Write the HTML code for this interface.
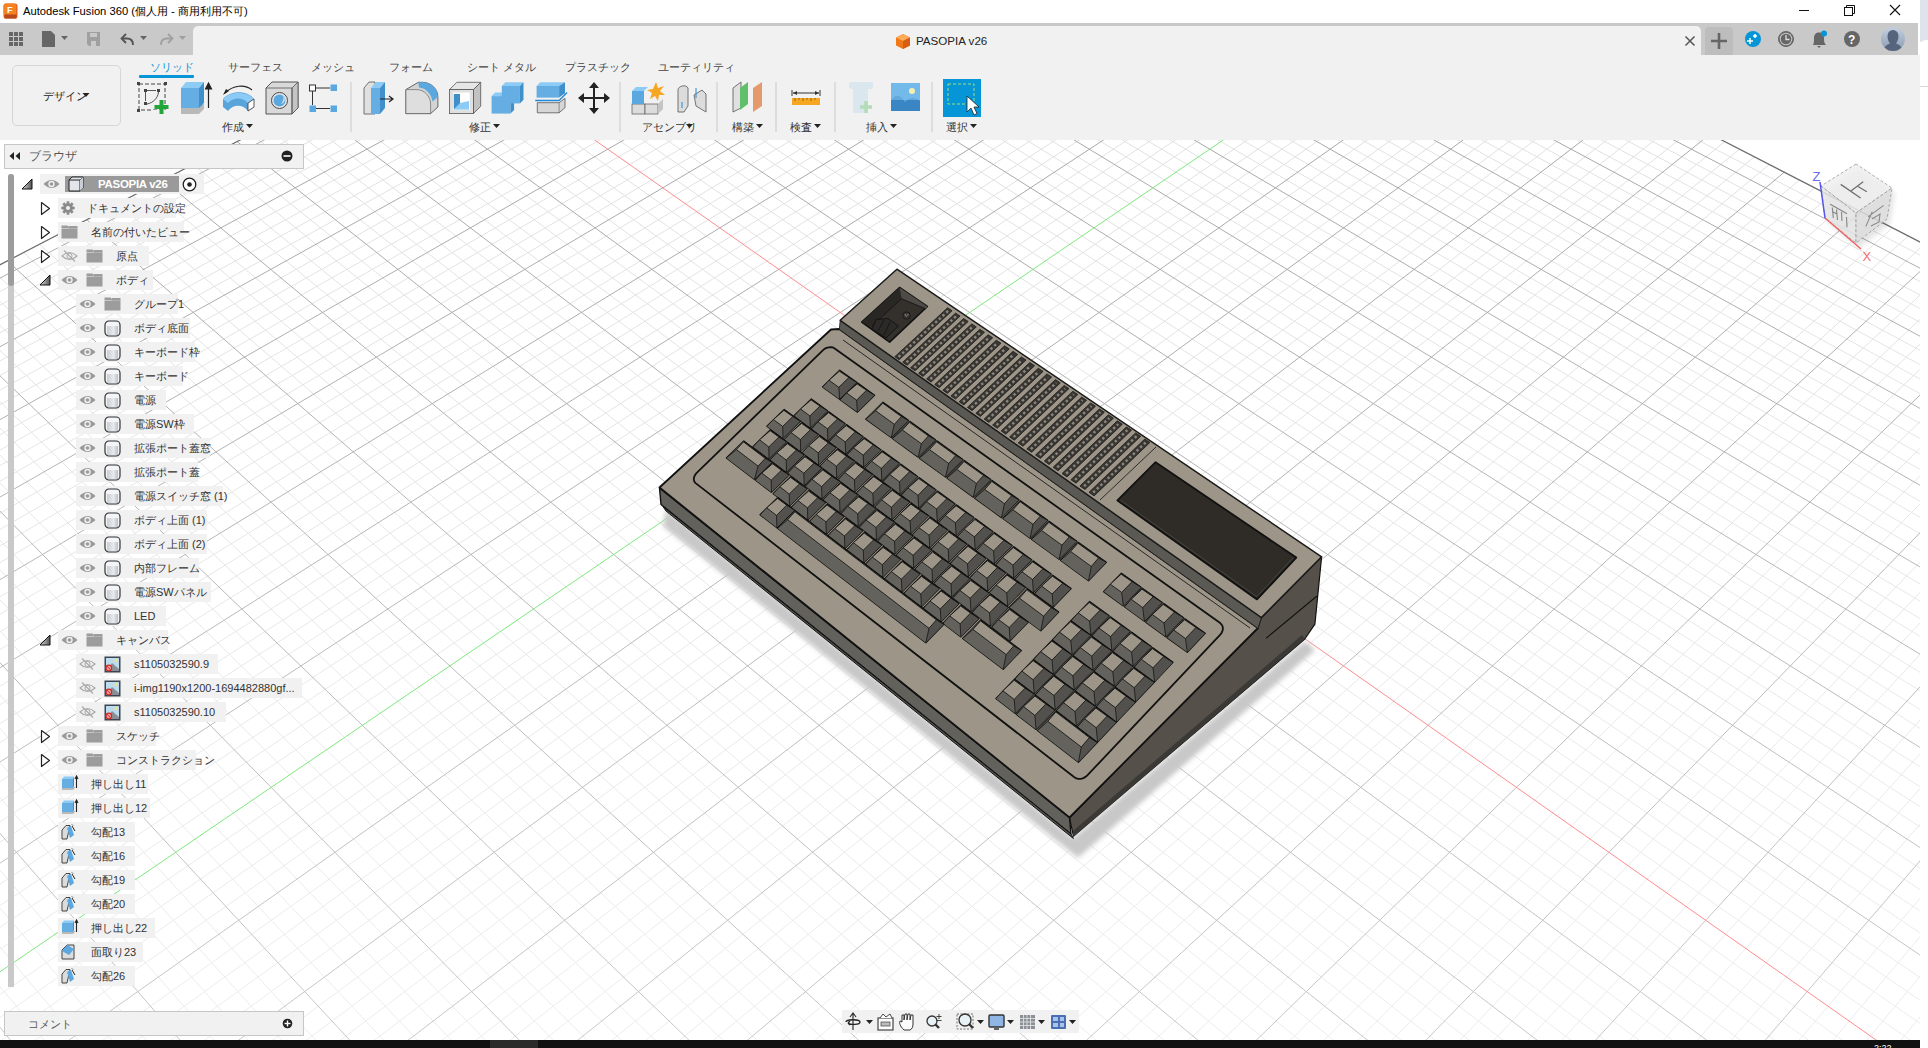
<!DOCTYPE html>
<html><head><meta charset="utf-8"><style>
*{box-sizing:border-box}
body{margin:0;width:1928px;height:1048px;position:relative;overflow:hidden;background:#fff;font-family:"Liberation Sans", sans-serif;}
.abs{position:absolute}
.row{background:#f1f1f1}
.txt{white-space:nowrap;line-height:14px}
.tab{font-size:11px;color:#444}
.lab{font-size:11px;color:#333}
</style></head><body>
<svg width="1928" height="1048" style="position:absolute;left:0;top:0">
<defs>
 <filter id="blur6" x="-20%" y="-20%" width="140%" height="140%"><feGaussianBlur stdDeviation="6"/></filter>
 <filter id="blur3" x="-20%" y="-20%" width="140%" height="140%"><feGaussianBlur stdDeviation="2.5"/></filter>
 <clipPath id="vp"><rect x="0" y="140" width="1920" height="900"/></clipPath>
</defs>
<g clip-path="url(#vp)">
<defs><linearGradient id="gmin" gradientUnits="userSpaceOnUse" x1="0" y1="140" x2="0" y2="1040"><stop offset="0" stop-color="#e1e1e1"/><stop offset="1" stop-color="#ededed"/></linearGradient><linearGradient id="gmaj" gradientUnits="userSpaceOnUse" x1="0" y1="140" x2="0" y2="1040"><stop offset="0" stop-color="#a8a8a8"/><stop offset="1" stop-color="#c8c8c8"/></linearGradient></defs>
<path d="M-536.8 543.8L977.2 -243.1M-520.5 565.2L997.2 -232.9M-512.3 576.0L1007.3 -227.7M-504.0 586.9L1017.4 -222.5M-495.6 597.9L1027.6 -217.2M-478.7 620.2L1048.1 -206.7M-470.1 631.5L1058.5 -201.3M-461.4 642.9L1068.9 -196.0M-452.7 654.3L1079.4 -190.6M-435.0 677.6L1100.5 -179.7M-426.1 689.4L1111.2 -174.2M-417.0 701.2L1121.9 -168.7M-407.9 713.2L1132.7 -163.1M-389.4 737.5L1154.5 -151.9M-380.1 749.8L1165.5 -146.2M-370.6 762.2L1176.6 -140.5M-361.1 774.7L1187.7 -134.8M-341.8 800.1L1210.2 -123.3M-332.0 813.0L1221.5 -117.4M-322.1 826.0L1232.9 -111.6M-312.1 839.1L1244.4 -105.7M-291.9 865.6L1267.5 -93.7M-281.7 879.1L1279.2 -87.7M-271.3 892.7L1291.0 -81.7M-260.9 906.4L1302.8 -75.6M-239.7 934.3L1326.7 -63.3M-229.0 948.4L1338.8 -57.1M-218.1 962.7L1350.9 -50.8M-207.2 977.0L1363.1 -44.6M-185.0 1006.2L1387.7 -31.9M-173.7 1021.1L1400.2 -25.5M-162.3 1036.0L1412.7 -19.0M-150.8 1051.1L1425.3 -12.5M-127.5 1081.8L1450.8 0.6M-115.7 1097.4L1463.6 7.2M-103.7 1113.1L1476.6 13.8M-91.6 1129.0L1489.6 20.5M-67.1 1161.2L1515.9 34.1M-54.6 1177.6L1529.2 40.9M-42.1 1194.1L1542.6 47.8M-29.3 1210.8L1556.0 54.7M-3.5 1244.8L1583.2 68.7M9.6 1262.0L1596.9 75.8M22.9 1279.4L1610.8 82.9M36.3 1297.0L1624.7 90.1M63.5 1332.8L1652.8 104.5M77.3 1351.0L1667.0 111.9M91.3 1369.4L1681.3 119.2M105.4 1388.0L1695.7 126.6M134.2 1425.7L1724.8 141.6M148.8 1444.9L1739.5 149.2M163.5 1464.4L1754.4 156.8M178.5 1484.0L1769.3 164.5M208.9 1523.9L1799.4 180.0M224.3 1544.2L1814.6 187.8M240.0 1564.8L1830.0 195.7M255.8 1585.6L1845.4 203.7M288.0 1627.9L1876.7 219.7M304.3 1649.4L1892.4 227.9M320.9 1671.2L1908.3 236.0M337.7 1693.2L1924.4 244.3M371.8 1738.1L1956.7 261.0M389.2 1760.9L1973.1 269.4M406.8 1784.1L1989.6 277.9M424.6 1807.5L2006.2 286.4M460.9 1855.2L2039.8 303.7M479.3 1879.4L2056.8 312.4M498.0 1904.0L2073.9 321.3M517.0 1928.9L2091.1 330.1M555.6 1979.7L2126.0 348.1M575.3 2005.6L2143.7 357.2M595.2 2031.8L2161.4 366.3M615.5 2058.4L2179.4 375.5M656.7 2112.5L2215.6 394.2M677.7 2140.2L2233.9 403.6M699.0 2168.2L2252.4 413.1M720.6 2196.5L2271.0 422.7M764.6 2254.4L2308.7 442.1M787.1 2284.0L2327.8 451.9M809.9 2314.0L2347.0 461.8M833.0 2344.4L2366.4 471.8M880.3 2406.4L2405.6 491.9M904.4 2438.1L2425.4 502.2M928.8 2470.3L2445.4 512.4M953.7 2502.9L2465.6 522.8M1004.4 2569.6L2506.4 543.8M1030.3 2603.7L2527.1 554.5M1056.6 2638.3L2547.9 565.2M1083.3 2673.4L2569.0 576.0M-516.5 533.3L1135.3 2673.4M-496.3 522.8L1159.8 2638.3M-476.4 512.4L1183.9 2603.7M-456.5 502.2L1207.7 2569.6M-417.4 481.8L1254.2 2502.9M-398.1 471.8L1276.9 2470.3M-378.9 461.8L1299.4 2438.1M-359.9 451.9L1321.5 2406.4M-322.3 432.4L1364.7 2344.4M-303.7 422.7L1385.9 2314.0M-285.3 413.1L1406.8 2284.0M-267.0 403.6L1427.4 2254.4M-230.8 384.8L1467.8 2196.5M-212.9 375.5L1487.6 2168.2M-195.2 366.3L1507.1 2140.2M-177.6 357.2L1526.4 2112.5M-142.8 339.1L1564.2 2058.4M-125.6 330.1L1582.7 2031.8M-108.5 321.3L1601.0 2005.6M-91.6 312.4L1619.0 1979.7M-58.1 295.0L1654.4 1928.9M-41.5 286.4L1671.8 1904.0M-25.1 277.9L1688.9 1879.4M-8.7 269.4L1705.9 1855.2M23.6 252.6L1739.1 1807.5M39.5 244.3L1755.4 1784.1M55.4 236.0L1771.5 1760.9M71.1 227.9L1787.5 1738.1M102.3 211.7L1818.8 1693.2M117.7 203.7L1834.1 1671.2M133.0 195.7L1849.3 1649.4M148.2 187.8L1864.3 1627.9M178.2 172.2L1893.8 1585.6M193.1 164.5L1908.3 1564.8M207.9 156.8L1922.6 1544.2M222.5 149.2L1936.8 1523.9M251.5 134.1L1964.7 1484.0M265.9 126.6L1978.3 1464.4M280.1 119.2L1991.9 1444.9M294.3 111.9L2005.3 1425.7M322.3 97.3L2031.6 1388.0M336.2 90.1L2044.6 1369.4M350.0 82.9L2057.4 1351.0M363.7 75.8L2070.1 1332.8M390.8 61.7L2095.0 1297.0M404.2 54.7L2107.3 1279.4M417.5 47.8L2119.4 1262.0M430.8 40.9L2131.5 1244.8M457.0 27.3L2155.1 1210.8M470.0 20.5L2166.8 1194.1M482.9 13.8L2178.3 1177.6M495.7 7.2L2189.7 1161.2M521.0 -6.0L2212.2 1129.0M533.6 -12.5L2223.3 1113.1M546.1 -19.0L2234.2 1097.4M558.5 -25.5L2245.1 1081.8M583.1 -38.2L2266.5 1051.1M595.2 -44.6L2277.0 1036.0M607.3 -50.8L2287.4 1021.1M619.3 -57.1L2297.8 1006.2M643.1 -69.5L2318.1 977.0M654.9 -75.6L2328.2 962.7M666.6 -81.7L2338.1 948.4M678.3 -87.7L2348.0 934.3M701.3 -99.7L2367.4 906.4M712.8 -105.7L2376.9 892.7M724.1 -111.6L2386.4 879.1M735.4 -117.4L2395.8 865.6M757.8 -129.1L2414.3 839.1M768.9 -134.8L2423.5 826.0M779.9 -140.5L2432.5 813.0M790.8 -146.2L2441.5 800.1M812.5 -157.5L2459.2 774.7M823.3 -163.1L2467.9 762.2M834.0 -168.7L2476.6 749.8M844.6 -174.2L2485.2 737.5M865.7 -185.1L2502.1 713.2M876.1 -190.6L2510.5 701.2M886.5 -196.0L2518.7 689.4M896.8 -201.3L2526.9 677.6M917.3 -212.0L2543.2 654.3M927.4 -217.2L2551.2 642.9M937.5 -222.5L2559.1 631.5M947.5 -227.7L2566.9 620.2M967.4 -238.0L2582.5 597.9M977.2 -243.1L2590.2 586.9" stroke="url(#gmin)" stroke-width="1" fill="none"/>
<path d="M-528.7 554.5L987.2 -238.0M-487.2 609.0L1037.8 -212.0M-443.9 665.9L1089.9 -185.1M-398.7 725.3L1143.6 -157.5M-351.5 787.4L1198.9 -129.1M-302.1 852.3L1255.9 -99.7M-250.4 920.3L1314.7 -69.5M-196.1 991.6L1375.4 -38.2M-79.4 1145.0L1502.7 27.3M-16.5 1227.7L1569.6 61.7M49.8 1314.8L1638.7 97.3M119.7 1406.7L1710.2 134.1M193.6 1503.9L1784.3 172.2M271.8 1606.6L1861.0 211.7M354.6 1715.5L1940.5 252.6M442.6 1831.2L2022.9 295.0M536.2 1954.2L2108.5 339.1M635.9 2085.3L2197.4 384.8M742.4 2225.3L2289.8 432.4M856.5 2375.2L2385.9 481.8M978.8 2536.0L2485.9 533.3M1110.5 2709.0L2590.2 586.9M-536.8 543.8L1110.5 2709.0M-436.9 491.9L1231.1 2536.0M-341.0 442.1L1343.3 2375.2M-248.8 394.2L1447.8 2225.3M-160.1 348.1L1545.4 2085.3M-74.8 303.7L1636.8 1954.2M7.5 261.0L1722.6 1831.2M86.8 219.7L1803.2 1715.5M163.2 180.0L1879.2 1606.6M237.1 141.6L1950.8 1503.9M308.4 104.5L2018.5 1406.7M377.3 68.7L2082.6 1314.8M508.4 0.6L2201.0 1145.0M570.8 -31.9L2255.8 1066.4M631.3 -63.3L2308.0 991.6M689.8 -93.7L2357.7 920.3M746.6 -123.3L2405.1 852.3M801.7 -151.9L2450.4 787.4M855.2 -179.7L2493.7 725.3M907.1 -206.7L2535.1 665.9M957.5 -232.9L2574.7 609.0" stroke="url(#gmaj)" stroke-width="1" fill="none"/>
<path d="M-536.8 543.8L977.2 -243.1L2590.2 586.9" stroke="#6e6e6e" stroke-width="1.2" fill="none"/>
<path d="M443.9 34.1L2143.4 1227.7" stroke="#ff8c8c" stroke-width="1" fill="none"/>
<path d="M-139.2 1066.4L1438.0 -6.0" stroke="#7ee87e" stroke-width="1" fill="none"/>
<polygon points="666,509 1073,838 1305,641 1315,650 1078,858 663,526" fill="#c8c8c8" filter="url(#blur3)"/>
<polygon points="1069.5,817.5 1258.0,628.0 1261.4,617.6 1321.6,556.8 1314.9,624.2 1304.8,639.0 1073.4,836.0" fill="#55514a" stroke="#111" stroke-width="1.2" stroke-linejoin="round" />
<path d="M1266,638.3 L1317,596" stroke="#111" stroke-width="1.1" fill="none"/>
<polygon points="1073.0,831.0 1302.0,635.0 1304.8,639.0 1073.4,837.0" fill="#3b3935" />
<polygon points="659.5,488.0 1069.5,817.5 1071.0,834.0 661.0,504.5" fill="#62615c" stroke="#111" stroke-width="1.4" stroke-linejoin="round" />
<polygon points="663.0,506.5 1071.0,834.0 1073.4,838.5 666.0,511.0" fill="#55544f" stroke="#111" stroke-width="1.0" stroke-linejoin="round" />
<polygon points="659.5,487.5 831.0,329.5 839.3,329.0 1258.0,628.0 1069.5,817.5" fill="#9d9688" stroke="#111" stroke-width="1.8" stroke-linejoin="round" />
<polygon points="840.2,320.3 1261.4,617.6 1258.0,628.5 839.3,329.5" fill="#5b5954" stroke="#1a1a1a" stroke-width="0.8" stroke-linejoin="round" />
<polygon points="896.9,269.2 840.2,320.3 1261.4,617.6 1321.6,556.8" fill="#9d9688" stroke="#1a1a1a" stroke-width="1.5" stroke-linejoin="round" />
<polygon points="894.8,356.7 899.2,359.8 952.1,310.8 947.6,307.8" fill="#393733" stroke="#111" stroke-width="0.7" stroke-linejoin="round" />
<path d="M898.6,356.8L948.3,310.7" stroke="#8d877b" stroke-width="2.4" stroke-dasharray="2.4,2.6"/>
<polygon points="902.7,362.2 907.1,365.3 960.1,316.1 955.6,313.1" fill="#393733" stroke="#111" stroke-width="0.7" stroke-linejoin="round" />
<path d="M906.5,362.3L956.3,316.1" stroke="#8d877b" stroke-width="2.4" stroke-dasharray="2.4,2.6"/>
<polygon points="910.6,367.7 915.1,370.8 968.2,321.5 963.6,318.5" fill="#393733" stroke="#111" stroke-width="0.7" stroke-linejoin="round" />
<path d="M914.4,367.8L964.3,321.5" stroke="#8d877b" stroke-width="2.4" stroke-dasharray="2.4,2.6"/>
<polygon points="918.6,373.3 923.0,376.4 976.3,326.9 971.7,323.9" fill="#393733" stroke="#111" stroke-width="0.7" stroke-linejoin="round" />
<path d="M922.4,373.4L972.4,326.9" stroke="#8d877b" stroke-width="2.4" stroke-dasharray="2.4,2.6"/>
<polygon points="926.6,378.9 931.1,382.1 984.5,332.3 979.9,329.3" fill="#393733" stroke="#111" stroke-width="0.7" stroke-linejoin="round" />
<path d="M930.4,379.0L980.6,332.3" stroke="#8d877b" stroke-width="2.4" stroke-dasharray="2.4,2.6"/>
<polygon points="934.7,384.5 939.2,387.7 992.7,337.8 988.1,334.7" fill="#393733" stroke="#111" stroke-width="0.7" stroke-linejoin="round" />
<path d="M938.5,384.6L988.8,337.8" stroke="#8d877b" stroke-width="2.4" stroke-dasharray="2.4,2.6"/>
<polygon points="942.8,390.2 947.3,393.4 1001.0,343.3 996.3,340.2" fill="#393733" stroke="#111" stroke-width="0.7" stroke-linejoin="round" />
<path d="M946.7,390.3L997.0,343.3" stroke="#8d877b" stroke-width="2.4" stroke-dasharray="2.4,2.6"/>
<polygon points="950.9,395.9 955.5,399.1 1009.3,348.9 1004.6,345.8" fill="#393733" stroke="#111" stroke-width="0.7" stroke-linejoin="round" />
<path d="M954.9,396.0L1005.3,348.8" stroke="#8d877b" stroke-width="2.4" stroke-dasharray="2.4,2.6"/>
<polygon points="959.2,401.7 963.8,404.9 1017.7,354.4 1013.0,351.3" fill="#393733" stroke="#111" stroke-width="0.7" stroke-linejoin="round" />
<path d="M963.1,401.8L1013.7,354.4" stroke="#8d877b" stroke-width="2.4" stroke-dasharray="2.4,2.6"/>
<polygon points="967.4,407.4 972.1,410.7 1026.1,360.1 1021.4,356.9" fill="#393733" stroke="#111" stroke-width="0.7" stroke-linejoin="round" />
<path d="M971.4,407.5L1022.1,360.0" stroke="#8d877b" stroke-width="2.4" stroke-dasharray="2.4,2.6"/>
<polygon points="975.8,413.3 980.4,416.5 1034.6,365.7 1029.8,362.5" fill="#393733" stroke="#111" stroke-width="0.7" stroke-linejoin="round" />
<path d="M979.7,413.4L1030.6,365.6" stroke="#8d877b" stroke-width="2.4" stroke-dasharray="2.4,2.6"/>
<polygon points="984.1,419.1 988.9,422.4 1043.1,371.4 1038.3,368.2" fill="#393733" stroke="#111" stroke-width="0.7" stroke-linejoin="round" />
<path d="M988.1,419.2L1039.1,371.3" stroke="#8d877b" stroke-width="2.4" stroke-dasharray="2.4,2.6"/>
<polygon points="992.6,425.0 997.3,428.3 1051.7,377.1 1046.9,373.9" fill="#393733" stroke="#111" stroke-width="0.7" stroke-linejoin="round" />
<path d="M996.6,425.1L1047.7,377.0" stroke="#8d877b" stroke-width="2.4" stroke-dasharray="2.4,2.6"/>
<polygon points="1001.1,430.9 1005.8,434.3 1060.3,382.9 1055.5,379.6" fill="#393733" stroke="#111" stroke-width="0.7" stroke-linejoin="round" />
<path d="M1005.1,431.0L1056.3,382.8" stroke="#8d877b" stroke-width="2.4" stroke-dasharray="2.4,2.6"/>
<polygon points="1009.6,436.9 1014.4,440.2 1069.0,388.6 1064.2,385.4" fill="#393733" stroke="#111" stroke-width="0.7" stroke-linejoin="round" />
<path d="M1013.6,437.0L1065.0,388.6" stroke="#8d877b" stroke-width="2.4" stroke-dasharray="2.4,2.6"/>
<polygon points="1018.2,442.9 1023.0,446.3 1077.8,394.5 1072.9,391.2" fill="#393733" stroke="#111" stroke-width="0.7" stroke-linejoin="round" />
<path d="M1022.3,443.0L1073.7,394.4" stroke="#8d877b" stroke-width="2.4" stroke-dasharray="2.4,2.6"/>
<polygon points="1026.8,448.9 1031.7,452.3 1086.6,400.3 1081.7,397.1" fill="#393733" stroke="#111" stroke-width="0.7" stroke-linejoin="round" />
<path d="M1030.9,449.1L1082.5,400.2" stroke="#8d877b" stroke-width="2.4" stroke-dasharray="2.4,2.6"/>
<polygon points="1035.5,455.0 1040.4,458.4 1095.5,406.2 1090.5,402.9" fill="#393733" stroke="#111" stroke-width="0.7" stroke-linejoin="round" />
<path d="M1039.7,455.1L1091.4,406.1" stroke="#8d877b" stroke-width="2.4" stroke-dasharray="2.4,2.6"/>
<polygon points="1044.3,461.1 1049.2,464.6 1104.4,412.2 1099.4,408.9" fill="#393733" stroke="#111" stroke-width="0.7" stroke-linejoin="round" />
<path d="M1048.4,461.3L1100.3,412.1" stroke="#8d877b" stroke-width="2.4" stroke-dasharray="2.4,2.6"/>
<polygon points="1053.1,467.3 1058.1,470.8 1113.4,418.2 1108.4,414.8" fill="#393733" stroke="#111" stroke-width="0.7" stroke-linejoin="round" />
<path d="M1057.3,467.4L1109.2,418.1" stroke="#8d877b" stroke-width="2.4" stroke-dasharray="2.4,2.6"/>
<polygon points="1062.0,473.5 1067.0,477.0 1122.4,424.2 1117.4,420.8" fill="#393733" stroke="#111" stroke-width="0.7" stroke-linejoin="round" />
<path d="M1066.2,473.6L1118.2,424.1" stroke="#8d877b" stroke-width="2.4" stroke-dasharray="2.4,2.6"/>
<polygon points="1070.9,479.7 1076.0,483.2 1131.5,430.2 1126.4,426.9" fill="#393733" stroke="#111" stroke-width="0.7" stroke-linejoin="round" />
<path d="M1075.1,479.9L1127.3,430.1" stroke="#8d877b" stroke-width="2.4" stroke-dasharray="2.4,2.6"/>
<polygon points="1079.9,486.0 1085.0,489.5 1140.7,436.3 1135.6,432.9" fill="#393733" stroke="#111" stroke-width="0.7" stroke-linejoin="round" />
<path d="M1084.1,486.2L1136.5,436.2" stroke="#8d877b" stroke-width="2.4" stroke-dasharray="2.4,2.6"/>
<polygon points="1089.0,492.3 1094.1,495.9 1149.9,442.5 1144.8,439.0" fill="#393733" stroke="#111" stroke-width="0.7" stroke-linejoin="round" />
<path d="M1093.2,492.5L1145.7,442.4" stroke="#8d877b" stroke-width="2.4" stroke-dasharray="2.4,2.6"/>
<path d="M1100,500 L1156,447" stroke="#111" stroke-width="0.8"/>
<polygon points="1155.6,462.2 1117.4,500.4 1257.0,599.4 1296.3,557.6" fill="#2f2c28" stroke="#111" stroke-width="1.8" stroke-linejoin="round" />
<path d="M1120.5,500.3 L1256.8,596.6 L1293.2,557.8" stroke="#4a4742" stroke-width="0.9" fill="none"/>
<polygon points="899.5,287.5 861.7,322.0 889.6,342.2 927.4,306.5" fill="#34312d" stroke="#111" stroke-width="1.6" stroke-linejoin="round" />
<polygon points="899.5,287.5 927.4,306.5 925.7,308.8 901.6,298.8" fill="#4e4b46" />
<polygon points="899.5,287.5 901.6,298.8 871.5,326.3 861.7,322.0" fill="#292724" />
<path d="M901.6,298.8 L925.7,308.8 M901.6,298.8 L871.5,326.3" stroke="#111" stroke-width="0.8"/>
<polygon points="876.0,319.5 888.0,318.5 898.5,326.0 886.0,338.0 872.0,329.0" fill="#2c2a27" stroke="#111" stroke-width="0.9" stroke-linejoin="round" />
<path d="M884,320 L878,331 M890,322 L884,335" stroke="#111" stroke-width="0.8"/>
<circle cx="906.5" cy="315.5" r="3.6" fill="#3a3834" stroke="#111" stroke-width="0.8"/>
<path d="M905,314 Q906,318 908.5,314" stroke="#999" stroke-width="0.8" fill="none"/>
<path d="M843,340 L1250,628" stroke="#1a1a1a" stroke-width="0.9"/>
<polygon points="1074.4,777.3 1076.3,778.4 1078.5,778.9 1080.9,778.8 1083.3,778.1 1085.5,776.9 1087.5,775.2 1220.3,634.6 1221.7,632.7 1222.6,630.6 1222.9,628.4 1222.6,626.4 1221.6,624.6 1220.2,623.1 834.3,348.2 832.7,347.4 830.8,347.1 828.7,347.3 826.6,347.9 824.5,348.9 822.8,350.4 696.7,472.8 695.3,474.6 694.3,476.5 693.8,478.4 693.9,480.2 694.5,481.8 695.6,483.1" fill="#9d9688" stroke="#111" stroke-width="1.8" stroke-linejoin="round" />
<polygon points="822.6,386.9 839.6,399.2 856.7,382.4 839.7,370.2" fill="#5a5955" stroke="#0d0d0d" stroke-width="1.3" stroke-linejoin="round" />
<polygon points="822.6,386.9 839.6,399.2 838.8,387.3 829.0,380.2" fill="#63625d" />
<polygon points="839.6,399.2 856.7,382.4 848.8,377.6 838.8,387.3" fill="#52514d" />
<polygon points="822.6,386.9 829.0,380.2 839.4,371.2 839.7,370.2" fill="#60605b" />
<polygon points="829.0,380.2 838.8,387.3 848.8,377.6 839.4,371.2" fill="#9d9688" stroke="#0d0d0d" stroke-width="0.8" stroke-linejoin="round" />
<path d="M822.6,386.9L829.0,380.2M839.6,399.2L838.8,387.3M856.7,382.4L848.8,377.6" stroke="#0d0d0d" stroke-width="0.7"/>
<polygon points="840.2,399.7 857.4,412.1 874.6,395.2 857.4,382.9" fill="#5a5955" stroke="#0d0d0d" stroke-width="1.3" stroke-linejoin="round" />
<polygon points="840.2,399.7 857.4,412.1 856.6,400.1 846.6,392.9" fill="#63625d" />
<polygon points="857.4,412.1 874.6,395.2 866.5,390.3 856.6,400.1" fill="#52514d" />
<polygon points="840.2,399.7 846.6,392.9 857.1,383.9 857.4,382.9" fill="#60605b" />
<polygon points="846.6,392.9 856.6,400.1 866.5,390.3 857.1,383.9" fill="#9d9688" stroke="#0d0d0d" stroke-width="0.8" stroke-linejoin="round" />
<path d="M840.2,399.7L846.6,392.9M857.4,412.1L856.6,400.1M874.6,395.2L866.5,390.3" stroke="#0d0d0d" stroke-width="0.7"/>
<polygon points="865.8,419.1 891.2,437.5 908.4,420.4 883.0,402.2" fill="#5a5955" stroke="#0d0d0d" stroke-width="1.3" stroke-linejoin="round" />
<polygon points="865.8,419.1 891.2,437.5 894.4,424.3 875.7,410.8" fill="#63625d" />
<polygon points="891.2,437.5 908.4,420.4 901.4,416.6 894.4,424.3" fill="#52514d" />
<polygon points="865.8,419.1 875.7,410.8 882.7,403.2 883.0,402.2" fill="#60605b" />
<polygon points="875.7,410.8 894.4,424.3 901.4,416.6 882.7,403.2" fill="#9d9688" stroke="#0d0d0d" stroke-width="0.8" stroke-linejoin="round" />
<path d="M865.8,419.1L875.7,410.8M891.2,437.5L894.4,424.3M908.4,420.4L901.4,416.6" stroke="#0d0d0d" stroke-width="0.7"/>
<polygon points="892.4,438.5 918.2,457.1 935.5,439.8 909.7,421.3" fill="#5a5955" stroke="#0d0d0d" stroke-width="1.3" stroke-linejoin="round" />
<polygon points="892.4,438.5 918.2,457.1 921.4,443.7 902.4,430.0" fill="#63625d" />
<polygon points="918.2,457.1 935.5,439.8 928.4,435.9 921.4,443.7" fill="#52514d" />
<polygon points="892.4,438.5 902.4,430.0 909.4,422.3 909.7,421.3" fill="#60605b" />
<polygon points="902.4,430.0 921.4,443.7 928.4,435.9 909.4,422.3" fill="#9d9688" stroke="#0d0d0d" stroke-width="0.8" stroke-linejoin="round" />
<path d="M892.4,438.5L902.4,430.0M918.2,457.1L921.4,443.7M935.5,439.8L928.4,435.9" stroke="#0d0d0d" stroke-width="0.7"/>
<polygon points="919.4,458.1 945.5,477.0 962.9,459.5 936.8,440.8" fill="#5a5955" stroke="#0d0d0d" stroke-width="1.3" stroke-linejoin="round" />
<polygon points="919.4,458.1 945.5,477.0 948.7,463.4 929.5,449.6" fill="#63625d" />
<polygon points="945.5,477.0 962.9,459.5 955.7,455.6 948.7,463.4" fill="#52514d" />
<polygon points="919.4,458.1 929.5,449.6 936.5,441.8 936.8,440.8" fill="#60605b" />
<polygon points="929.5,449.6 948.7,463.4 955.7,455.6 936.5,441.8" fill="#9d9688" stroke="#0d0d0d" stroke-width="0.8" stroke-linejoin="round" />
<path d="M919.4,458.1L929.5,449.6M945.5,477.0L948.7,463.4M962.9,459.5L955.7,455.6" stroke="#0d0d0d" stroke-width="0.7"/>
<polygon points="946.9,477.9 973.3,497.1 990.8,479.5 964.3,460.5" fill="#5a5955" stroke="#0d0d0d" stroke-width="1.3" stroke-linejoin="round" />
<polygon points="946.9,477.9 973.3,497.1 976.4,483.4 956.9,469.4" fill="#63625d" />
<polygon points="973.3,497.1 990.8,479.5 983.5,475.5 976.4,483.4" fill="#52514d" />
<polygon points="946.9,477.9 956.9,469.4 964.0,461.5 964.3,460.5" fill="#60605b" />
<polygon points="956.9,469.4 976.4,483.4 983.5,475.5 964.0,461.5" fill="#9d9688" stroke="#0d0d0d" stroke-width="0.8" stroke-linejoin="round" />
<path d="M946.9,477.9L956.9,469.4M973.3,497.1L976.4,483.4M990.8,479.5L983.5,475.5" stroke="#0d0d0d" stroke-width="0.7"/>
<polygon points="974.7,498.1 1001.5,517.6 1019.0,499.8 992.1,480.5" fill="#5a5955" stroke="#0d0d0d" stroke-width="1.3" stroke-linejoin="round" />
<polygon points="974.7,498.1 1001.5,517.6 1004.5,503.7 984.7,489.4" fill="#63625d" />
<polygon points="1001.5,517.6 1019.0,499.8 1011.6,495.7 1004.5,503.7" fill="#52514d" />
<polygon points="974.7,498.1 984.7,489.4 991.8,481.5 992.1,480.5" fill="#60605b" />
<polygon points="984.7,489.4 1004.5,503.7 1011.6,495.7 991.8,481.5" fill="#9d9688" stroke="#0d0d0d" stroke-width="0.8" stroke-linejoin="round" />
<path d="M974.7,498.1L984.7,489.4M1001.5,517.6L1004.5,503.7M1019.0,499.8L1011.6,495.7" stroke="#0d0d0d" stroke-width="0.7"/>
<polygon points="1002.9,518.5 1030.1,538.3 1047.7,520.3 1020.4,500.7" fill="#5a5955" stroke="#0d0d0d" stroke-width="1.3" stroke-linejoin="round" />
<polygon points="1002.9,518.5 1030.1,538.3 1033.0,524.3 1013.0,509.8" fill="#63625d" />
<polygon points="1030.1,538.3 1047.7,520.3 1040.2,516.2 1033.0,524.3" fill="#52514d" />
<polygon points="1002.9,518.5 1013.0,509.8 1020.1,501.7 1020.4,500.7" fill="#60605b" />
<polygon points="1013.0,509.8 1033.0,524.3 1040.2,516.2 1020.1,501.7" fill="#9d9688" stroke="#0d0d0d" stroke-width="0.8" stroke-linejoin="round" />
<path d="M1002.9,518.5L1013.0,509.8M1030.1,538.3L1033.0,524.3M1047.7,520.3L1040.2,516.2" stroke="#0d0d0d" stroke-width="0.7"/>
<polygon points="1031.5,539.3 1059.1,559.3 1076.8,541.2 1049.1,521.3" fill="#5a5955" stroke="#0d0d0d" stroke-width="1.3" stroke-linejoin="round" />
<polygon points="1031.5,539.3 1059.1,559.3 1062.0,545.2 1041.6,530.5" fill="#63625d" />
<polygon points="1059.1,559.3 1076.8,541.2 1069.2,536.9 1062.0,545.2" fill="#52514d" />
<polygon points="1031.5,539.3 1041.6,530.5 1048.8,522.3 1049.1,521.3" fill="#60605b" />
<polygon points="1041.6,530.5 1062.0,545.2 1069.2,536.9 1048.8,522.3" fill="#9d9688" stroke="#0d0d0d" stroke-width="0.8" stroke-linejoin="round" />
<path d="M1031.5,539.3L1041.6,530.5M1059.1,559.3L1062.0,545.2M1076.8,541.2L1069.2,536.9" stroke="#0d0d0d" stroke-width="0.7"/>
<polygon points="1060.5,560.3 1088.5,580.7 1106.3,562.3 1078.2,542.2" fill="#5a5955" stroke="#0d0d0d" stroke-width="1.3" stroke-linejoin="round" />
<polygon points="1060.5,560.3 1088.5,580.7 1091.3,566.4 1070.7,551.5" fill="#63625d" />
<polygon points="1088.5,580.7 1106.3,562.3 1098.5,558.0 1091.3,566.4" fill="#52514d" />
<polygon points="1060.5,560.3 1070.7,551.5 1077.9,543.2 1078.2,542.2" fill="#60605b" />
<polygon points="1070.7,551.5 1091.3,566.4 1098.5,558.0 1077.9,543.2" fill="#9d9688" stroke="#0d0d0d" stroke-width="0.8" stroke-linejoin="round" />
<path d="M1060.5,560.3L1070.7,551.5M1088.5,580.7L1091.3,566.4M1106.3,562.3L1098.5,558.0" stroke="#0d0d0d" stroke-width="0.7"/>
<polygon points="1103.6,591.6 1123.3,605.9 1141.1,587.3 1121.4,573.2" fill="#5a5955" stroke="#0d0d0d" stroke-width="1.3" stroke-linejoin="round" />
<polygon points="1103.6,591.6 1123.3,605.9 1121.7,592.4 1110.3,584.2" fill="#63625d" />
<polygon points="1123.3,605.9 1141.1,587.3 1132.0,581.7 1121.7,592.4" fill="#52514d" />
<polygon points="1103.6,591.6 1110.3,584.2 1121.1,574.2 1121.4,573.2" fill="#60605b" />
<polygon points="1110.3,584.2 1121.7,592.4 1132.0,581.7 1121.1,574.2" fill="#9d9688" stroke="#0d0d0d" stroke-width="0.8" stroke-linejoin="round" />
<path d="M1103.6,591.6L1110.3,584.2M1123.3,605.9L1121.7,592.4M1141.1,587.3L1132.0,581.7" stroke="#0d0d0d" stroke-width="0.7"/>
<polygon points="1124.5,606.8 1144.4,621.2 1162.2,602.5 1142.3,588.2" fill="#5a5955" stroke="#0d0d0d" stroke-width="1.3" stroke-linejoin="round" />
<polygon points="1124.5,606.8 1144.4,621.2 1142.7,607.6 1131.2,599.3" fill="#63625d" />
<polygon points="1144.4,621.2 1162.2,602.5 1153.1,596.8 1142.7,607.6" fill="#52514d" />
<polygon points="1124.5,606.8 1131.2,599.3 1142.0,589.2 1142.3,588.2" fill="#60605b" />
<polygon points="1131.2,599.3 1142.7,607.6 1153.1,596.8 1142.0,589.2" fill="#9d9688" stroke="#0d0d0d" stroke-width="0.8" stroke-linejoin="round" />
<path d="M1124.5,606.8L1131.2,599.3M1144.4,621.2L1142.7,607.6M1162.2,602.5L1153.1,596.8" stroke="#0d0d0d" stroke-width="0.7"/>
<polygon points="1145.7,622.1 1165.7,636.7 1183.6,617.8 1163.5,603.4" fill="#5a5955" stroke="#0d0d0d" stroke-width="1.3" stroke-linejoin="round" />
<polygon points="1145.7,622.1 1165.7,636.7 1164.0,623.0 1152.3,614.5" fill="#63625d" />
<polygon points="1165.7,636.7 1183.6,617.8 1174.4,612.1 1164.0,623.0" fill="#52514d" />
<polygon points="1145.7,622.1 1152.3,614.5 1163.2,604.4 1163.5,603.4" fill="#60605b" />
<polygon points="1152.3,614.5 1164.0,623.0 1174.4,612.1 1163.2,604.4" fill="#9d9688" stroke="#0d0d0d" stroke-width="0.8" stroke-linejoin="round" />
<path d="M1145.7,622.1L1152.3,614.5M1165.7,636.7L1164.0,623.0M1183.6,617.8L1174.4,612.1" stroke="#0d0d0d" stroke-width="0.7"/>
<polygon points="1167.0,637.6 1187.3,652.3 1205.2,633.3 1184.9,618.8" fill="#5a5955" stroke="#0d0d0d" stroke-width="1.3" stroke-linejoin="round" />
<polygon points="1167.0,637.6 1187.3,652.3 1185.5,638.5 1173.7,630.0" fill="#63625d" />
<polygon points="1187.3,652.3 1205.2,633.3 1195.9,627.5 1185.5,638.5" fill="#52514d" />
<polygon points="1167.0,637.6 1173.7,630.0 1184.6,619.8 1184.9,618.8" fill="#60605b" />
<polygon points="1173.7,630.0 1185.5,638.5 1195.9,627.5 1184.6,619.8" fill="#9d9688" stroke="#0d0d0d" stroke-width="0.8" stroke-linejoin="round" />
<path d="M1167.0,637.6L1173.7,630.0M1187.3,652.3L1185.5,638.5M1205.2,633.3L1195.9,627.5" stroke="#0d0d0d" stroke-width="0.7"/>
<polygon points="1071.3,620.4 1090.9,634.8 1109.2,615.8 1089.6,601.5" fill="#5a5955" stroke="#0d0d0d" stroke-width="1.3" stroke-linejoin="round" />
<polygon points="1071.3,620.4 1090.9,634.8 1089.5,621.1 1078.2,612.8" fill="#63625d" />
<polygon points="1090.9,634.8 1109.2,615.8 1100.1,610.1 1089.5,621.1" fill="#52514d" />
<polygon points="1071.3,620.4 1078.2,612.8 1089.3,602.5 1089.6,601.5" fill="#60605b" />
<polygon points="1078.2,612.8 1089.5,621.1 1100.1,610.1 1089.3,602.5" fill="#9d9688" stroke="#0d0d0d" stroke-width="0.8" stroke-linejoin="round" />
<path d="M1071.3,620.4L1078.2,612.8M1090.9,634.8L1089.5,621.1M1109.2,615.8L1100.1,610.1" stroke="#0d0d0d" stroke-width="0.7"/>
<polygon points="1092.1,635.8 1111.9,650.4 1130.2,631.2 1110.4,616.7" fill="#5a5955" stroke="#0d0d0d" stroke-width="1.3" stroke-linejoin="round" />
<polygon points="1092.1,635.8 1111.9,650.4 1110.5,636.5 1099.0,628.1" fill="#63625d" />
<polygon points="1111.9,650.4 1130.2,631.2 1121.1,625.4 1110.5,636.5" fill="#52514d" />
<polygon points="1092.1,635.8 1099.0,628.1 1110.1,617.7 1110.4,616.7" fill="#60605b" />
<polygon points="1099.0,628.1 1110.5,636.5 1121.1,625.4 1110.1,617.7" fill="#9d9688" stroke="#0d0d0d" stroke-width="0.8" stroke-linejoin="round" />
<path d="M1092.1,635.8L1099.0,628.1M1111.9,650.4L1110.5,636.5M1130.2,631.2L1121.1,625.4" stroke="#0d0d0d" stroke-width="0.7"/>
<polygon points="1113.1,651.3 1133.1,666.0 1151.5,646.7 1131.5,632.1" fill="#5a5955" stroke="#0d0d0d" stroke-width="1.3" stroke-linejoin="round" />
<polygon points="1113.1,651.3 1133.1,666.0 1131.6,652.1 1120.0,643.5" fill="#63625d" />
<polygon points="1133.1,666.0 1151.5,646.7 1142.3,640.9 1131.6,652.1" fill="#52514d" />
<polygon points="1113.1,651.3 1120.0,643.5 1131.2,633.1 1131.5,632.1" fill="#60605b" />
<polygon points="1120.0,643.5 1131.6,652.1 1142.3,640.9 1131.2,633.1" fill="#9d9688" stroke="#0d0d0d" stroke-width="0.8" stroke-linejoin="round" />
<path d="M1113.1,651.3L1120.0,643.5M1133.1,666.0L1131.6,652.1M1151.5,646.7L1142.3,640.9" stroke="#0d0d0d" stroke-width="0.7"/>
<polygon points="1134.4,667.0 1154.6,681.9 1173.0,662.4 1152.8,647.7" fill="#5a5955" stroke="#0d0d0d" stroke-width="1.3" stroke-linejoin="round" />
<polygon points="1134.4,667.0 1154.6,681.9 1153.0,667.8 1141.3,659.2" fill="#63625d" />
<polygon points="1154.6,681.9 1173.0,662.4 1163.7,656.5 1153.0,667.8" fill="#52514d" />
<polygon points="1134.4,667.0 1141.3,659.2 1152.5,648.7 1152.8,647.7" fill="#60605b" />
<polygon points="1141.3,659.2 1153.0,667.8 1163.7,656.5 1152.5,648.7" fill="#9d9688" stroke="#0d0d0d" stroke-width="0.8" stroke-linejoin="round" />
<path d="M1134.4,667.0L1141.3,659.2M1154.6,681.9L1153.0,667.8M1173.0,662.4L1163.7,656.5" stroke="#0d0d0d" stroke-width="0.7"/>
<polygon points="794.1,415.8 810.3,427.7 827.5,410.8 811.3,398.9" fill="#5a5955" stroke="#0d0d0d" stroke-width="1.3" stroke-linejoin="round" />
<polygon points="794.1,415.8 810.3,427.7 809.9,415.9 800.5,409.0" fill="#63625d" />
<polygon points="810.3,427.7 827.5,410.8 819.9,406.1 809.9,415.9" fill="#52514d" />
<polygon points="794.1,415.8 800.5,409.0 811.0,399.9 811.3,398.9" fill="#60605b" />
<polygon points="800.5,409.0 809.9,415.9 819.9,406.1 811.0,399.9" fill="#9d9688" stroke="#0d0d0d" stroke-width="0.8" stroke-linejoin="round" />
<path d="M794.1,415.8L800.5,409.0M810.3,427.7L809.9,415.9M827.5,410.8L819.9,406.1" stroke="#0d0d0d" stroke-width="0.7"/>
<polygon points="811.6,428.7 827.9,440.7 845.2,423.7 828.8,411.7" fill="#5a5955" stroke="#0d0d0d" stroke-width="1.3" stroke-linejoin="round" />
<polygon points="811.6,428.7 827.9,440.7 827.5,428.8 818.0,421.8" fill="#63625d" />
<polygon points="827.9,440.7 845.2,423.7 837.5,419.0 827.5,428.8" fill="#52514d" />
<polygon points="811.6,428.7 818.0,421.8 828.5,412.7 828.8,411.7" fill="#60605b" />
<polygon points="818.0,421.8 827.5,428.8 837.5,419.0 828.5,412.7" fill="#9d9688" stroke="#0d0d0d" stroke-width="0.8" stroke-linejoin="round" />
<path d="M811.6,428.7L818.0,421.8M827.9,440.7L827.5,428.8M845.2,423.7L837.5,419.0" stroke="#0d0d0d" stroke-width="0.7"/>
<polygon points="829.2,441.7 845.7,453.8 863.1,436.7 846.5,424.6" fill="#5a5955" stroke="#0d0d0d" stroke-width="1.3" stroke-linejoin="round" />
<polygon points="829.2,441.7 845.7,453.8 845.2,441.9 835.7,434.8" fill="#63625d" />
<polygon points="845.7,453.8 863.1,436.7 855.3,431.9 845.2,441.9" fill="#52514d" />
<polygon points="829.2,441.7 835.7,434.8 846.2,425.6 846.5,424.6" fill="#60605b" />
<polygon points="835.7,434.8 845.2,441.9 855.3,431.9 846.2,425.6" fill="#9d9688" stroke="#0d0d0d" stroke-width="0.8" stroke-linejoin="round" />
<path d="M829.2,441.7L835.7,434.8M845.7,453.8L845.2,441.9M863.1,436.7L855.3,431.9" stroke="#0d0d0d" stroke-width="0.7"/>
<polygon points="847.0,454.8 863.7,467.1 881.1,449.9 864.4,437.7" fill="#5a5955" stroke="#0d0d0d" stroke-width="1.3" stroke-linejoin="round" />
<polygon points="847.0,454.8 863.7,467.1 863.2,455.1 853.5,447.9" fill="#63625d" />
<polygon points="863.7,467.1 881.1,449.9 873.3,445.0 863.2,455.1" fill="#52514d" />
<polygon points="847.0,454.8 853.5,447.9 864.1,438.7 864.4,437.7" fill="#60605b" />
<polygon points="853.5,447.9 863.2,455.1 873.3,445.0 864.1,438.7" fill="#9d9688" stroke="#0d0d0d" stroke-width="0.8" stroke-linejoin="round" />
<path d="M847.0,454.8L853.5,447.9M863.7,467.1L863.2,455.1M881.1,449.9L873.3,445.0" stroke="#0d0d0d" stroke-width="0.7"/>
<polygon points="865.0,468.1 881.8,480.5 899.3,463.1 882.4,450.9" fill="#5a5955" stroke="#0d0d0d" stroke-width="1.3" stroke-linejoin="round" />
<polygon points="865.0,468.1 881.8,480.5 881.3,468.4 871.5,461.2" fill="#63625d" />
<polygon points="881.8,480.5 899.3,463.1 891.4,458.3 881.3,468.4" fill="#52514d" />
<polygon points="865.0,468.1 871.5,461.2 882.1,451.9 882.4,450.9" fill="#60605b" />
<polygon points="871.5,461.2 881.3,468.4 891.4,458.3 882.1,451.9" fill="#9d9688" stroke="#0d0d0d" stroke-width="0.8" stroke-linejoin="round" />
<path d="M865.0,468.1L871.5,461.2M881.8,480.5L881.3,468.4M899.3,463.1L891.4,458.3" stroke="#0d0d0d" stroke-width="0.7"/>
<polygon points="883.2,481.5 900.1,494.0 917.6,476.6 900.6,464.1" fill="#5a5955" stroke="#0d0d0d" stroke-width="1.3" stroke-linejoin="round" />
<polygon points="883.2,481.5 900.1,494.0 899.5,481.8 889.7,474.5" fill="#63625d" />
<polygon points="900.1,494.0 917.6,476.6 909.7,471.6 899.5,481.8" fill="#52514d" />
<polygon points="883.2,481.5 889.7,474.5 900.3,465.1 900.6,464.1" fill="#60605b" />
<polygon points="889.7,474.5 899.5,481.8 909.7,471.6 900.3,465.1" fill="#9d9688" stroke="#0d0d0d" stroke-width="0.8" stroke-linejoin="round" />
<path d="M883.2,481.5L889.7,474.5M900.1,494.0L899.5,481.8M917.6,476.6L909.7,471.6" stroke="#0d0d0d" stroke-width="0.7"/>
<polygon points="901.5,495.0 918.6,507.7 936.1,490.1 919.0,477.6" fill="#5a5955" stroke="#0d0d0d" stroke-width="1.3" stroke-linejoin="round" />
<polygon points="901.5,495.0 918.6,507.7 918.0,495.3 908.0,488.0" fill="#63625d" />
<polygon points="918.6,507.7 936.1,490.1 928.1,485.1 918.0,495.3" fill="#52514d" />
<polygon points="901.5,495.0 908.0,488.0 918.7,478.6 919.0,477.6" fill="#60605b" />
<polygon points="908.0,488.0 918.0,495.3 928.1,485.1 918.7,478.6" fill="#9d9688" stroke="#0d0d0d" stroke-width="0.8" stroke-linejoin="round" />
<path d="M901.5,495.0L908.0,488.0M918.6,507.7L918.0,495.3M936.1,490.1L928.1,485.1" stroke="#0d0d0d" stroke-width="0.7"/>
<polygon points="920.0,508.7 937.3,521.5 954.9,503.8 937.5,491.1" fill="#5a5955" stroke="#0d0d0d" stroke-width="1.3" stroke-linejoin="round" />
<polygon points="920.0,508.7 937.3,521.5 936.6,509.0 926.6,501.6" fill="#63625d" />
<polygon points="937.3,521.5 954.9,503.8 946.8,498.7 936.6,509.0" fill="#52514d" />
<polygon points="920.0,508.7 926.6,501.6 937.2,492.1 937.5,491.1" fill="#60605b" />
<polygon points="926.6,501.6 936.6,509.0 946.8,498.7 937.2,492.1" fill="#9d9688" stroke="#0d0d0d" stroke-width="0.8" stroke-linejoin="round" />
<path d="M920.0,508.7L926.6,501.6M937.3,521.5L936.6,509.0M954.9,503.8L946.8,498.7" stroke="#0d0d0d" stroke-width="0.7"/>
<polygon points="938.7,522.5 956.1,535.4 973.8,517.6 956.3,504.8" fill="#5a5955" stroke="#0d0d0d" stroke-width="1.3" stroke-linejoin="round" />
<polygon points="938.7,522.5 956.1,535.4 955.4,522.8 945.3,515.4" fill="#63625d" />
<polygon points="956.1,535.4 973.8,517.6 965.6,512.5 955.4,522.8" fill="#52514d" />
<polygon points="938.7,522.5 945.3,515.4 956.0,505.8 956.3,504.8" fill="#60605b" />
<polygon points="945.3,515.4 955.4,522.8 965.6,512.5 956.0,505.8" fill="#9d9688" stroke="#0d0d0d" stroke-width="0.8" stroke-linejoin="round" />
<path d="M938.7,522.5L945.3,515.4M956.1,535.4L955.4,522.8M973.8,517.6L965.6,512.5" stroke="#0d0d0d" stroke-width="0.7"/>
<polygon points="957.6,536.4 975.2,549.4 992.8,531.5 975.2,518.6" fill="#5a5955" stroke="#0d0d0d" stroke-width="1.3" stroke-linejoin="round" />
<polygon points="957.6,536.4 975.2,549.4 974.4,536.8 964.2,529.2" fill="#63625d" />
<polygon points="975.2,549.4 992.8,531.5 984.6,526.4 974.4,536.8" fill="#52514d" />
<polygon points="957.6,536.4 964.2,529.2 974.9,519.6 975.2,518.6" fill="#60605b" />
<polygon points="964.2,529.2 974.4,536.8 984.6,526.4 974.9,519.6" fill="#9d9688" stroke="#0d0d0d" stroke-width="0.8" stroke-linejoin="round" />
<path d="M957.6,536.4L964.2,529.2M975.2,549.4L974.4,536.8M992.8,531.5L984.6,526.4" stroke="#0d0d0d" stroke-width="0.7"/>
<polygon points="976.6,550.5 994.4,563.6 1012.1,545.6 994.3,532.5" fill="#5a5955" stroke="#0d0d0d" stroke-width="1.3" stroke-linejoin="round" />
<polygon points="976.6,550.5 994.4,563.6 993.6,550.9 983.2,543.3" fill="#63625d" />
<polygon points="994.4,563.6 1012.1,545.6 1003.8,540.4 993.6,550.9" fill="#52514d" />
<polygon points="976.6,550.5 983.2,543.3 994.0,533.5 994.3,532.5" fill="#60605b" />
<polygon points="983.2,543.3 993.6,550.9 1003.8,540.4 994.0,533.5" fill="#9d9688" stroke="#0d0d0d" stroke-width="0.8" stroke-linejoin="round" />
<path d="M976.6,550.5L983.2,543.3M994.4,563.6L993.6,550.9M1012.1,545.6L1003.8,540.4" stroke="#0d0d0d" stroke-width="0.7"/>
<polygon points="995.9,564.7 1013.8,578.0 1031.6,559.8 1013.6,546.6" fill="#5a5955" stroke="#0d0d0d" stroke-width="1.3" stroke-linejoin="round" />
<polygon points="995.9,564.7 1013.8,578.0 1012.9,565.1 1002.5,557.4" fill="#63625d" />
<polygon points="1013.8,578.0 1031.6,559.8 1023.2,554.6 1012.9,565.1" fill="#52514d" />
<polygon points="995.9,564.7 1002.5,557.4 1013.3,547.6 1013.6,546.6" fill="#60605b" />
<polygon points="1002.5,557.4 1012.9,565.1 1023.2,554.6 1013.3,547.6" fill="#9d9688" stroke="#0d0d0d" stroke-width="0.8" stroke-linejoin="round" />
<path d="M995.9,564.7L1002.5,557.4M1013.8,578.0L1012.9,565.1M1031.6,559.8L1023.2,554.6" stroke="#0d0d0d" stroke-width="0.7"/>
<polygon points="1015.3,579.1 1033.4,592.5 1051.2,574.1 1033.0,560.9" fill="#5a5955" stroke="#0d0d0d" stroke-width="1.3" stroke-linejoin="round" />
<polygon points="1015.3,579.1 1033.4,592.5 1032.5,579.5 1021.9,571.7" fill="#63625d" />
<polygon points="1033.4,592.5 1051.2,574.1 1042.8,568.9 1032.5,579.5" fill="#52514d" />
<polygon points="1015.3,579.1 1021.9,571.7 1032.7,561.9 1033.0,560.9" fill="#60605b" />
<polygon points="1021.9,571.7 1032.5,579.5 1042.8,568.9 1032.7,561.9" fill="#9d9688" stroke="#0d0d0d" stroke-width="0.8" stroke-linejoin="round" />
<path d="M1015.3,579.1L1021.9,571.7M1033.4,592.5L1032.5,579.5M1051.2,574.1L1042.8,568.9" stroke="#0d0d0d" stroke-width="0.7"/>
<polygon points="1034.9,593.5 1053.2,607.1 1071.1,588.6 1052.7,575.2" fill="#5a5955" stroke="#0d0d0d" stroke-width="1.3" stroke-linejoin="round" />
<polygon points="1034.9,593.5 1053.2,607.1 1052.2,594.0 1041.6,586.1" fill="#63625d" />
<polygon points="1053.2,607.1 1071.1,588.6 1062.6,583.3 1052.2,594.0" fill="#52514d" />
<polygon points="1034.9,593.5 1041.6,586.1 1052.4,576.2 1052.7,575.2" fill="#60605b" />
<polygon points="1041.6,586.1 1052.2,594.0 1062.6,583.3 1052.4,576.2" fill="#9d9688" stroke="#0d0d0d" stroke-width="0.8" stroke-linejoin="round" />
<path d="M1034.9,593.5L1041.6,586.1M1053.2,607.1L1052.2,594.0M1071.1,588.6L1062.6,583.3" stroke="#0d0d0d" stroke-width="0.7"/>
<polygon points="766.9,426.2 783.0,438.2 800.3,421.3 784.2,409.4" fill="#5a5955" stroke="#0d0d0d" stroke-width="1.3" stroke-linejoin="round" />
<polygon points="766.9,426.2 783.0,438.2 782.7,426.4 773.4,419.5" fill="#63625d" />
<polygon points="783.0,438.2 800.3,421.3 792.8,416.6 782.7,426.4" fill="#52514d" />
<polygon points="766.9,426.2 773.4,419.5 783.9,410.4 784.2,409.4" fill="#60605b" />
<polygon points="773.4,419.5 782.7,426.4 792.8,416.6 783.9,410.4" fill="#9d9688" stroke="#0d0d0d" stroke-width="0.8" stroke-linejoin="round" />
<path d="M766.9,426.2L773.4,419.5M783.0,438.2L782.7,426.4M800.3,421.3L792.8,416.6" stroke="#0d0d0d" stroke-width="0.7"/>
<polygon points="784.5,439.4 800.7,451.4 818.1,434.4 801.9,422.4" fill="#5a5955" stroke="#0d0d0d" stroke-width="1.3" stroke-linejoin="round" />
<polygon points="784.5,439.4 800.7,451.4 800.4,439.5 791.0,432.5" fill="#63625d" />
<polygon points="800.7,451.4 818.1,434.4 810.5,429.7 800.4,439.5" fill="#52514d" />
<polygon points="784.5,439.4 791.0,432.5 801.6,423.4 801.9,422.4" fill="#60605b" />
<polygon points="791.0,432.5 800.4,439.5 810.5,429.7 801.6,423.4" fill="#9d9688" stroke="#0d0d0d" stroke-width="0.8" stroke-linejoin="round" />
<path d="M784.5,439.4L791.0,432.5M800.7,451.4L800.4,439.5M818.1,434.4L810.5,429.7" stroke="#0d0d0d" stroke-width="0.7"/>
<polygon points="802.3,452.6 818.6,464.8 836.0,447.6 819.6,435.5" fill="#5a5955" stroke="#0d0d0d" stroke-width="1.3" stroke-linejoin="round" />
<polygon points="802.3,452.6 818.6,464.8 818.2,452.8 808.8,445.7" fill="#63625d" />
<polygon points="818.6,464.8 836.0,447.6 828.3,442.9 818.2,452.8" fill="#52514d" />
<polygon points="802.3,452.6 808.8,445.7 819.3,436.5 819.6,435.5" fill="#60605b" />
<polygon points="808.8,445.7 818.2,452.8 828.3,442.9 819.3,436.5" fill="#9d9688" stroke="#0d0d0d" stroke-width="0.8" stroke-linejoin="round" />
<path d="M802.3,452.6L808.8,445.7M818.6,464.8L818.2,452.8M836.0,447.6L828.3,442.9" stroke="#0d0d0d" stroke-width="0.7"/>
<polygon points="820.2,466.0 836.7,478.3 854.2,461.0 837.6,448.8" fill="#5a5955" stroke="#0d0d0d" stroke-width="1.3" stroke-linejoin="round" />
<polygon points="820.2,466.0 836.7,478.3 836.3,466.2 826.7,459.1" fill="#63625d" />
<polygon points="836.7,478.3 854.2,461.0 846.4,456.2 836.3,466.2" fill="#52514d" />
<polygon points="820.2,466.0 826.7,459.1 837.3,449.8 837.6,448.8" fill="#60605b" />
<polygon points="826.7,459.1 836.3,466.2 846.4,456.2 837.3,449.8" fill="#9d9688" stroke="#0d0d0d" stroke-width="0.8" stroke-linejoin="round" />
<path d="M820.2,466.0L826.7,459.1M836.7,478.3L836.3,466.2M854.2,461.0L846.4,456.2" stroke="#0d0d0d" stroke-width="0.7"/>
<polygon points="838.3,479.5 854.9,491.9 872.4,474.5 855.7,462.2" fill="#5a5955" stroke="#0d0d0d" stroke-width="1.3" stroke-linejoin="round" />
<polygon points="838.3,479.5 854.9,491.9 854.5,479.7 844.8,472.5" fill="#63625d" />
<polygon points="854.9,491.9 872.4,474.5 864.6,469.7 854.5,479.7" fill="#52514d" />
<polygon points="838.3,479.5 844.8,472.5 855.4,463.2 855.7,462.2" fill="#60605b" />
<polygon points="844.8,472.5 854.5,479.7 864.6,469.7 855.4,463.2" fill="#9d9688" stroke="#0d0d0d" stroke-width="0.8" stroke-linejoin="round" />
<path d="M838.3,479.5L844.8,472.5M854.9,491.9L854.5,479.7M872.4,474.5L864.6,469.7" stroke="#0d0d0d" stroke-width="0.7"/>
<polygon points="856.5,493.1 873.4,505.7 890.9,488.2 874.0,475.7" fill="#5a5955" stroke="#0d0d0d" stroke-width="1.3" stroke-linejoin="round" />
<polygon points="856.5,493.1 873.4,505.7 872.9,493.4 863.1,486.1" fill="#63625d" />
<polygon points="873.4,505.7 890.9,488.2 883.0,483.2 872.9,493.4" fill="#52514d" />
<polygon points="856.5,493.1 863.1,486.1 873.7,476.7 874.0,475.7" fill="#60605b" />
<polygon points="863.1,486.1 872.9,493.4 883.0,483.2 873.7,476.7" fill="#9d9688" stroke="#0d0d0d" stroke-width="0.8" stroke-linejoin="round" />
<path d="M856.5,493.1L863.1,486.1M873.4,505.7L872.9,493.4M890.9,488.2L883.0,483.2" stroke="#0d0d0d" stroke-width="0.7"/>
<polygon points="875.0,506.9 892.0,519.6 909.6,502.0 892.5,489.4" fill="#5a5955" stroke="#0d0d0d" stroke-width="1.3" stroke-linejoin="round" />
<polygon points="875.0,506.9 892.0,519.6 891.4,507.2 881.6,499.8" fill="#63625d" />
<polygon points="892.0,519.6 909.6,502.0 901.6,497.0 891.4,507.2" fill="#52514d" />
<polygon points="875.0,506.9 881.6,499.8 892.2,490.4 892.5,489.4" fill="#60605b" />
<polygon points="881.6,499.8 891.4,507.2 901.6,497.0 892.2,490.4" fill="#9d9688" stroke="#0d0d0d" stroke-width="0.8" stroke-linejoin="round" />
<path d="M875.0,506.9L881.6,499.8M892.0,519.6L891.4,507.2M909.6,502.0L901.6,497.0" stroke="#0d0d0d" stroke-width="0.7"/>
<polygon points="893.6,520.8 910.8,533.6 928.4,515.9 911.2,503.2" fill="#5a5955" stroke="#0d0d0d" stroke-width="1.3" stroke-linejoin="round" />
<polygon points="893.6,520.8 910.8,533.6 910.1,521.1 900.2,513.7" fill="#63625d" />
<polygon points="910.8,533.6 928.4,515.9 920.4,510.8 910.1,521.1" fill="#52514d" />
<polygon points="893.6,520.8 900.2,513.7 910.9,504.2 911.2,503.2" fill="#60605b" />
<polygon points="900.2,513.7 910.1,521.1 920.4,510.8 910.9,504.2" fill="#9d9688" stroke="#0d0d0d" stroke-width="0.8" stroke-linejoin="round" />
<path d="M893.6,520.8L900.2,513.7M910.8,533.6L910.1,521.1M928.4,515.9L920.4,510.8" stroke="#0d0d0d" stroke-width="0.7"/>
<polygon points="912.4,534.8 929.7,547.8 947.4,529.9 930.1,517.1" fill="#5a5955" stroke="#0d0d0d" stroke-width="1.3" stroke-linejoin="round" />
<polygon points="912.4,534.8 929.7,547.8 929.1,535.2 919.0,527.7" fill="#63625d" />
<polygon points="929.7,547.8 947.4,529.9 939.3,524.8 929.1,535.2" fill="#52514d" />
<polygon points="912.4,534.8 919.0,527.7 929.8,518.1 930.1,517.1" fill="#60605b" />
<polygon points="919.0,527.7 929.1,535.2 939.3,524.8 929.8,518.1" fill="#9d9688" stroke="#0d0d0d" stroke-width="0.8" stroke-linejoin="round" />
<path d="M912.4,534.8L919.0,527.7M929.7,547.8L929.1,535.2M947.4,529.9L939.3,524.8" stroke="#0d0d0d" stroke-width="0.7"/>
<polygon points="931.4,549.0 948.9,562.1 966.6,544.1 949.1,531.1" fill="#5a5955" stroke="#0d0d0d" stroke-width="1.3" stroke-linejoin="round" />
<polygon points="931.4,549.0 948.9,562.1 948.2,549.4 938.0,541.8" fill="#63625d" />
<polygon points="948.9,562.1 966.6,544.1 958.5,539.0 948.2,549.4" fill="#52514d" />
<polygon points="931.4,549.0 938.0,541.8 948.8,532.1 949.1,531.1" fill="#60605b" />
<polygon points="938.0,541.8 948.2,549.4 958.5,539.0 948.8,532.1" fill="#9d9688" stroke="#0d0d0d" stroke-width="0.8" stroke-linejoin="round" />
<path d="M931.4,549.0L938.0,541.8M948.9,562.1L948.2,549.4M966.6,544.1L958.5,539.0" stroke="#0d0d0d" stroke-width="0.7"/>
<polygon points="950.6,563.3 968.3,576.5 986.0,558.4 968.3,545.3" fill="#5a5955" stroke="#0d0d0d" stroke-width="1.3" stroke-linejoin="round" />
<polygon points="950.6,563.3 968.3,576.5 967.5,563.7 957.2,556.1" fill="#63625d" />
<polygon points="968.3,576.5 986.0,558.4 977.8,553.2 967.5,563.7" fill="#52514d" />
<polygon points="950.6,563.3 957.2,556.1 968.0,546.3 968.3,545.3" fill="#60605b" />
<polygon points="957.2,556.1 967.5,563.7 977.8,553.2 968.0,546.3" fill="#9d9688" stroke="#0d0d0d" stroke-width="0.8" stroke-linejoin="round" />
<path d="M950.6,563.3L957.2,556.1M968.3,576.5L967.5,563.7M986.0,558.4L977.8,553.2" stroke="#0d0d0d" stroke-width="0.7"/>
<polygon points="970.0,577.8 987.8,591.1 1005.6,572.9 987.7,559.7" fill="#5a5955" stroke="#0d0d0d" stroke-width="1.3" stroke-linejoin="round" />
<polygon points="970.0,577.8 987.8,591.1 987.0,578.2 976.6,570.5" fill="#63625d" />
<polygon points="987.8,591.1 1005.6,572.9 997.3,567.6 987.0,578.2" fill="#52514d" />
<polygon points="970.0,577.8 976.6,570.5 987.4,560.7 987.7,559.7" fill="#60605b" />
<polygon points="976.6,570.5 987.0,578.2 997.3,567.6 987.4,560.7" fill="#9d9688" stroke="#0d0d0d" stroke-width="0.8" stroke-linejoin="round" />
<path d="M970.0,577.8L976.6,570.5M987.8,591.1L987.0,578.2M1005.6,572.9L997.3,567.6" stroke="#0d0d0d" stroke-width="0.7"/>
<polygon points="989.5,592.4 1007.6,605.9 1025.4,587.5 1007.3,574.2" fill="#5a5955" stroke="#0d0d0d" stroke-width="1.3" stroke-linejoin="round" />
<polygon points="989.5,592.4 1007.6,605.9 1006.7,592.8 996.2,585.0" fill="#63625d" />
<polygon points="1007.6,605.9 1025.4,587.5 1017.0,582.2 1006.7,592.8" fill="#52514d" />
<polygon points="989.5,592.4 996.2,585.0 1007.0,575.2 1007.3,574.2" fill="#60605b" />
<polygon points="996.2,585.0 1006.7,592.8 1017.0,582.2 1007.0,575.2" fill="#9d9688" stroke="#0d0d0d" stroke-width="0.8" stroke-linejoin="round" />
<path d="M989.5,592.4L996.2,585.0M1007.6,605.9L1006.7,592.8M1025.4,587.5L1017.0,582.2" stroke="#0d0d0d" stroke-width="0.7"/>
<polygon points="1009.3,607.2 1040.8,630.7 1058.7,612.1 1027.2,588.8" fill="#5a5955" stroke="#0d0d0d" stroke-width="1.3" stroke-linejoin="round" />
<polygon points="1009.3,607.2 1040.8,630.7 1043.7,616.2 1019.5,598.2" fill="#63625d" />
<polygon points="1040.8,630.7 1058.7,612.1 1051.1,607.7 1043.7,616.2" fill="#52514d" />
<polygon points="1009.3,607.2 1019.5,598.2 1026.9,589.8 1027.2,588.8" fill="#60605b" />
<polygon points="1019.5,598.2 1043.7,616.2 1051.1,607.7 1026.9,589.8" fill="#9d9688" stroke="#0d0d0d" stroke-width="0.8" stroke-linejoin="round" />
<path d="M1009.3,607.2L1019.5,598.2M1040.8,630.7L1043.7,616.2M1058.7,612.1L1051.1,607.7" stroke="#0d0d0d" stroke-width="0.7"/>
<polygon points="1052.6,639.8 1072.1,654.4 1090.5,635.2 1070.9,620.8" fill="#5a5955" stroke="#0d0d0d" stroke-width="1.3" stroke-linejoin="round" />
<polygon points="1052.6,639.8 1072.1,654.4 1070.8,640.6 1059.5,632.1" fill="#63625d" />
<polygon points="1072.1,654.4 1090.5,635.2 1081.5,629.5 1070.8,640.6" fill="#52514d" />
<polygon points="1052.6,639.8 1059.5,632.1 1070.6,621.8 1070.9,620.8" fill="#60605b" />
<polygon points="1059.5,632.1 1070.8,640.6 1081.5,629.5 1070.6,621.8" fill="#9d9688" stroke="#0d0d0d" stroke-width="0.8" stroke-linejoin="round" />
<path d="M1052.6,639.8L1059.5,632.1M1072.1,654.4L1070.8,640.6M1090.5,635.2L1081.5,629.5" stroke="#0d0d0d" stroke-width="0.7"/>
<polygon points="1073.4,655.3 1093.1,670.0 1111.5,650.8 1091.7,636.2" fill="#5a5955" stroke="#0d0d0d" stroke-width="1.3" stroke-linejoin="round" />
<polygon points="1073.4,655.3 1093.1,670.0 1091.7,656.1 1080.3,647.6" fill="#63625d" />
<polygon points="1093.1,670.0 1111.5,650.8 1102.4,644.9 1091.7,656.1" fill="#52514d" />
<polygon points="1073.4,655.3 1080.3,647.6 1091.4,637.2 1091.7,636.2" fill="#60605b" />
<polygon points="1080.3,647.6 1091.7,656.1 1102.4,644.9 1091.4,637.2" fill="#9d9688" stroke="#0d0d0d" stroke-width="0.8" stroke-linejoin="round" />
<path d="M1073.4,655.3L1080.3,647.6M1093.1,670.0L1091.7,656.1M1111.5,650.8L1102.4,644.9" stroke="#0d0d0d" stroke-width="0.7"/>
<polygon points="1094.3,671.0 1114.3,685.9 1132.7,666.4 1112.8,651.7" fill="#5a5955" stroke="#0d0d0d" stroke-width="1.3" stroke-linejoin="round" />
<polygon points="1094.3,671.0 1114.3,685.9 1112.8,671.8 1101.3,663.2" fill="#63625d" />
<polygon points="1114.3,685.9 1132.7,666.4 1123.6,660.5 1112.8,671.8" fill="#52514d" />
<polygon points="1094.3,671.0 1101.3,663.2 1112.5,652.7 1112.8,651.7" fill="#60605b" />
<polygon points="1101.3,663.2 1112.8,671.8 1123.6,660.5 1112.5,652.7" fill="#9d9688" stroke="#0d0d0d" stroke-width="0.8" stroke-linejoin="round" />
<path d="M1094.3,671.0L1101.3,663.2M1114.3,685.9L1112.8,671.8M1132.7,666.4L1123.6,660.5" stroke="#0d0d0d" stroke-width="0.7"/>
<polygon points="1115.5,686.8 1135.7,701.8 1154.2,682.3 1134.0,667.4" fill="#5a5955" stroke="#0d0d0d" stroke-width="1.3" stroke-linejoin="round" />
<polygon points="1115.5,686.8 1135.7,701.8 1134.2,687.7 1122.5,678.9" fill="#63625d" />
<polygon points="1135.7,701.8 1154.2,682.3 1144.9,676.3 1134.2,687.7" fill="#52514d" />
<polygon points="1115.5,686.8 1122.5,678.9 1133.7,668.4 1134.0,667.4" fill="#60605b" />
<polygon points="1122.5,678.9 1134.2,687.7 1144.9,676.3 1133.7,668.4" fill="#9d9688" stroke="#0d0d0d" stroke-width="0.8" stroke-linejoin="round" />
<path d="M1115.5,686.8L1122.5,678.9M1135.7,701.8L1134.2,687.7M1154.2,682.3L1144.9,676.3" stroke="#0d0d0d" stroke-width="0.7"/>
<polygon points="753.0,446.7 769.0,458.8 786.4,441.7 770.4,429.7" fill="#5a5955" stroke="#0d0d0d" stroke-width="1.3" stroke-linejoin="round" />
<polygon points="753.0,446.7 769.0,458.8 768.8,446.9 759.5,439.8" fill="#63625d" />
<polygon points="769.0,458.8 786.4,441.7 778.9,437.0 768.8,446.9" fill="#52514d" />
<polygon points="753.0,446.7 759.5,439.8 770.1,430.7 770.4,429.7" fill="#60605b" />
<polygon points="759.5,439.8 768.8,446.9 778.9,437.0 770.1,430.7" fill="#9d9688" stroke="#0d0d0d" stroke-width="0.8" stroke-linejoin="round" />
<path d="M753.0,446.7L759.5,439.8M769.0,458.8L768.8,446.9M786.4,441.7L778.9,437.0" stroke="#0d0d0d" stroke-width="0.7"/>
<polygon points="770.3,459.7 786.5,472.0 804.0,454.8 787.7,442.7" fill="#5a5955" stroke="#0d0d0d" stroke-width="1.3" stroke-linejoin="round" />
<polygon points="770.3,459.7 786.5,472.0 786.2,460.0 776.8,452.9" fill="#63625d" />
<polygon points="786.5,472.0 804.0,454.8 796.4,450.0 786.2,460.0" fill="#52514d" />
<polygon points="770.3,459.7 776.8,452.9 787.4,443.7 787.7,442.7" fill="#60605b" />
<polygon points="776.8,452.9 786.2,460.0 796.4,450.0 787.4,443.7" fill="#9d9688" stroke="#0d0d0d" stroke-width="0.8" stroke-linejoin="round" />
<path d="M770.3,459.7L776.8,452.9M786.5,472.0L786.2,460.0M804.0,454.8L796.4,450.0" stroke="#0d0d0d" stroke-width="0.7"/>
<polygon points="787.8,473.0 804.2,485.3 821.7,468.0 805.3,455.8" fill="#5a5955" stroke="#0d0d0d" stroke-width="1.3" stroke-linejoin="round" />
<polygon points="787.8,473.0 804.2,485.3 803.8,473.2 794.4,466.1" fill="#63625d" />
<polygon points="804.2,485.3 821.7,468.0 814.0,463.2 803.8,473.2" fill="#52514d" />
<polygon points="787.8,473.0 794.4,466.1 805.0,456.8 805.3,455.8" fill="#60605b" />
<polygon points="794.4,466.1 803.8,473.2 814.0,463.2 805.0,456.8" fill="#9d9688" stroke="#0d0d0d" stroke-width="0.8" stroke-linejoin="round" />
<path d="M787.8,473.0L794.4,466.1M804.2,485.3L803.8,473.2M821.7,468.0L814.0,463.2" stroke="#0d0d0d" stroke-width="0.7"/>
<polygon points="805.5,486.3 822.0,498.8 839.5,481.4 823.0,469.0" fill="#5a5955" stroke="#0d0d0d" stroke-width="1.3" stroke-linejoin="round" />
<polygon points="805.5,486.3 822.0,498.8 821.6,486.6 812.1,479.3" fill="#63625d" />
<polygon points="822.0,498.8 839.5,481.4 831.8,476.5 821.6,486.6" fill="#52514d" />
<polygon points="805.5,486.3 812.1,479.3 822.7,470.0 823.0,469.0" fill="#60605b" />
<polygon points="812.1,479.3 821.6,486.6 831.8,476.5 822.7,470.0" fill="#9d9688" stroke="#0d0d0d" stroke-width="0.8" stroke-linejoin="round" />
<path d="M805.5,486.3L812.1,479.3M822.0,498.8L821.6,486.6M839.5,481.4L831.8,476.5" stroke="#0d0d0d" stroke-width="0.7"/>
<polygon points="823.3,499.8 840.0,512.3 857.6,494.8 840.9,482.4" fill="#5a5955" stroke="#0d0d0d" stroke-width="1.3" stroke-linejoin="round" />
<polygon points="823.3,499.8 840.0,512.3 839.6,500.1 829.9,492.8" fill="#63625d" />
<polygon points="840.0,512.3 857.6,494.8 849.8,489.9 839.6,500.1" fill="#52514d" />
<polygon points="823.3,499.8 829.9,492.8 840.6,483.4 840.9,482.4" fill="#60605b" />
<polygon points="829.9,492.8 839.6,500.1 849.8,489.9 840.6,483.4" fill="#9d9688" stroke="#0d0d0d" stroke-width="0.8" stroke-linejoin="round" />
<path d="M823.3,499.8L829.9,492.8M840.0,512.3L839.6,500.1M857.6,494.8L849.8,489.9" stroke="#0d0d0d" stroke-width="0.7"/>
<polygon points="841.4,513.4 858.2,526.1 875.8,508.5 858.9,495.9" fill="#5a5955" stroke="#0d0d0d" stroke-width="1.3" stroke-linejoin="round" />
<polygon points="841.4,513.4 858.2,526.1 857.7,513.7 847.9,506.3" fill="#63625d" />
<polygon points="858.2,526.1 875.8,508.5 867.9,503.5 857.7,513.7" fill="#52514d" />
<polygon points="841.4,513.4 847.9,506.3 858.6,496.9 858.9,495.9" fill="#60605b" />
<polygon points="847.9,506.3 857.7,513.7 867.9,503.5 858.6,496.9" fill="#9d9688" stroke="#0d0d0d" stroke-width="0.8" stroke-linejoin="round" />
<path d="M841.4,513.4L847.9,506.3M858.2,526.1L857.7,513.7M875.8,508.5L867.9,503.5" stroke="#0d0d0d" stroke-width="0.7"/>
<polygon points="859.5,527.1 876.5,539.9 894.2,522.2 877.2,509.5" fill="#5a5955" stroke="#0d0d0d" stroke-width="1.3" stroke-linejoin="round" />
<polygon points="859.5,527.1 876.5,539.9 876.0,527.4 866.1,520.0" fill="#63625d" />
<polygon points="876.5,539.9 894.2,522.2 886.2,517.1 876.0,527.4" fill="#52514d" />
<polygon points="859.5,527.1 866.1,520.0 876.9,510.5 877.2,509.5" fill="#60605b" />
<polygon points="866.1,520.0 876.0,527.4 886.2,517.1 876.9,510.5" fill="#9d9688" stroke="#0d0d0d" stroke-width="0.8" stroke-linejoin="round" />
<path d="M859.5,527.1L866.1,520.0M876.5,539.9L876.0,527.4M894.2,522.2L886.2,517.1" stroke="#0d0d0d" stroke-width="0.7"/>
<polygon points="877.9,540.9 895.0,553.9 912.8,536.1 895.6,523.2" fill="#5a5955" stroke="#0d0d0d" stroke-width="1.3" stroke-linejoin="round" />
<polygon points="877.9,540.9 895.0,553.9 894.5,541.3 884.5,533.8" fill="#63625d" />
<polygon points="895.0,553.9 912.8,536.1 904.7,531.0 894.5,541.3" fill="#52514d" />
<polygon points="877.9,540.9 884.5,533.8 895.3,524.2 895.6,523.2" fill="#60605b" />
<polygon points="884.5,533.8 894.5,541.3 904.7,531.0 895.3,524.2" fill="#9d9688" stroke="#0d0d0d" stroke-width="0.8" stroke-linejoin="round" />
<path d="M877.9,540.9L884.5,533.8M895.0,553.9L894.5,541.3M912.8,536.1L904.7,531.0" stroke="#0d0d0d" stroke-width="0.7"/>
<polygon points="896.4,554.9 913.7,568.0 931.5,550.1 914.2,537.1" fill="#5a5955" stroke="#0d0d0d" stroke-width="1.3" stroke-linejoin="round" />
<polygon points="896.4,554.9 913.7,568.0 913.1,555.3 903.1,547.7" fill="#63625d" />
<polygon points="913.7,568.0 931.5,550.1 923.4,544.9 913.1,555.3" fill="#52514d" />
<polygon points="896.4,554.9 903.1,547.7 913.9,538.1 914.2,537.1" fill="#60605b" />
<polygon points="903.1,547.7 913.1,555.3 923.4,544.9 913.9,538.1" fill="#9d9688" stroke="#0d0d0d" stroke-width="0.8" stroke-linejoin="round" />
<path d="M896.4,554.9L903.1,547.7M913.7,568.0L913.1,555.3M931.5,550.1L923.4,544.9" stroke="#0d0d0d" stroke-width="0.7"/>
<polygon points="915.2,569.1 932.6,582.3 950.5,564.2 932.9,551.1" fill="#5a5955" stroke="#0d0d0d" stroke-width="1.3" stroke-linejoin="round" />
<polygon points="915.2,569.1 932.6,582.3 932.0,569.5 921.8,561.8" fill="#63625d" />
<polygon points="932.6,582.3 950.5,564.2 942.3,559.0 932.0,569.5" fill="#52514d" />
<polygon points="915.2,569.1 921.8,561.8 932.6,552.1 932.9,551.1" fill="#60605b" />
<polygon points="921.8,561.8 932.0,569.5 942.3,559.0 932.6,552.1" fill="#9d9688" stroke="#0d0d0d" stroke-width="0.8" stroke-linejoin="round" />
<path d="M915.2,569.1L921.8,561.8M932.6,582.3L932.0,569.5M950.5,564.2L942.3,559.0" stroke="#0d0d0d" stroke-width="0.7"/>
<polygon points="934.1,583.3 951.7,596.7 969.6,578.5 951.9,565.3" fill="#5a5955" stroke="#0d0d0d" stroke-width="1.3" stroke-linejoin="round" />
<polygon points="934.1,583.3 951.7,596.7 951.0,583.8 940.7,576.0" fill="#63625d" />
<polygon points="951.7,596.7 969.6,578.5 961.3,573.2 951.0,583.8" fill="#52514d" />
<polygon points="934.1,583.3 940.7,576.0 951.6,566.3 951.9,565.3" fill="#60605b" />
<polygon points="940.7,576.0 951.0,583.8 961.3,573.2 951.6,566.3" fill="#9d9688" stroke="#0d0d0d" stroke-width="0.8" stroke-linejoin="round" />
<path d="M934.1,583.3L940.7,576.0M951.7,596.7L951.0,583.8M969.6,578.5L961.3,573.2" stroke="#0d0d0d" stroke-width="0.7"/>
<polygon points="953.1,597.8 971.0,611.2 988.9,592.9 971.0,579.6" fill="#5a5955" stroke="#0d0d0d" stroke-width="1.3" stroke-linejoin="round" />
<polygon points="953.1,597.8 971.0,611.2 970.2,598.2 959.9,590.4" fill="#63625d" />
<polygon points="971.0,611.2 988.9,592.9 980.6,587.6 970.2,598.2" fill="#52514d" />
<polygon points="953.1,597.8 959.9,590.4 970.7,580.6 971.0,579.6" fill="#60605b" />
<polygon points="959.9,590.4 970.2,598.2 980.6,587.6 970.7,580.6" fill="#9d9688" stroke="#0d0d0d" stroke-width="0.8" stroke-linejoin="round" />
<path d="M953.1,597.8L959.9,590.4M971.0,611.2L970.2,598.2M988.9,592.9L980.6,587.6" stroke="#0d0d0d" stroke-width="0.7"/>
<polygon points="972.4,612.3 990.4,625.9 1008.4,607.5 990.3,594.0" fill="#5a5955" stroke="#0d0d0d" stroke-width="1.3" stroke-linejoin="round" />
<polygon points="972.4,612.3 990.4,625.9 989.6,612.8 979.1,604.9" fill="#63625d" />
<polygon points="990.4,625.9 1008.4,607.5 1000.0,602.1 989.6,612.8" fill="#52514d" />
<polygon points="972.4,612.3 979.1,604.9 990.0,595.0 990.3,594.0" fill="#60605b" />
<polygon points="979.1,604.9 989.6,612.8 1000.0,602.1 990.0,595.0" fill="#9d9688" stroke="#0d0d0d" stroke-width="0.8" stroke-linejoin="round" />
<path d="M972.4,612.3L979.1,604.9M990.4,625.9L989.6,612.8M1008.4,607.5L1000.0,602.1" stroke="#0d0d0d" stroke-width="0.7"/>
<polygon points="991.9,627.0 1010.1,640.7 1028.1,622.2 1009.9,608.6" fill="#5a5955" stroke="#0d0d0d" stroke-width="1.3" stroke-linejoin="round" />
<polygon points="991.9,627.0 1010.1,640.7 1009.2,627.5 998.6,619.6" fill="#63625d" />
<polygon points="1010.1,640.7 1028.1,622.2 1019.6,616.8 1009.2,627.5" fill="#52514d" />
<polygon points="991.9,627.0 998.6,619.6 1009.6,609.6 1009.9,608.6" fill="#60605b" />
<polygon points="998.6,619.6 1009.2,627.5 1019.6,616.8 1009.6,609.6" fill="#9d9688" stroke="#0d0d0d" stroke-width="0.8" stroke-linejoin="round" />
<path d="M991.9,627.0L998.6,619.6M1010.1,640.7L1009.2,627.5M1028.1,622.2L1019.6,616.8" stroke="#0d0d0d" stroke-width="0.7"/>
<polygon points="1033.8,659.3 1053.3,674.0 1071.7,654.8 1052.2,640.2" fill="#5a5955" stroke="#0d0d0d" stroke-width="1.3" stroke-linejoin="round" />
<polygon points="1033.8,659.3 1053.3,674.0 1052.0,660.1 1040.7,651.6" fill="#63625d" />
<polygon points="1053.3,674.0 1071.7,654.8 1062.7,648.9 1052.0,660.1" fill="#52514d" />
<polygon points="1033.8,659.3 1040.7,651.6 1051.9,641.2 1052.2,640.2" fill="#60605b" />
<polygon points="1040.7,651.6 1052.0,660.1 1062.7,648.9 1051.9,641.2" fill="#9d9688" stroke="#0d0d0d" stroke-width="0.8" stroke-linejoin="round" />
<path d="M1033.8,659.3L1040.7,651.6M1053.3,674.0L1052.0,660.1M1071.7,654.8L1062.7,648.9" stroke="#0d0d0d" stroke-width="0.7"/>
<polygon points="1054.5,674.9 1074.2,689.8 1092.7,670.4 1073.0,655.7" fill="#5a5955" stroke="#0d0d0d" stroke-width="1.3" stroke-linejoin="round" />
<polygon points="1054.5,674.9 1074.2,689.8 1072.9,675.8 1061.5,667.2" fill="#63625d" />
<polygon points="1074.2,689.8 1092.7,670.4 1083.6,664.5 1072.9,675.8" fill="#52514d" />
<polygon points="1054.5,674.9 1061.5,667.2 1072.7,656.7 1073.0,655.7" fill="#60605b" />
<polygon points="1061.5,667.2 1072.9,675.8 1083.6,664.5 1072.7,656.7" fill="#9d9688" stroke="#0d0d0d" stroke-width="0.8" stroke-linejoin="round" />
<path d="M1054.5,674.9L1061.5,667.2M1074.2,689.8L1072.9,675.8M1092.7,670.4L1083.6,664.5" stroke="#0d0d0d" stroke-width="0.7"/>
<polygon points="1075.4,690.8 1095.3,705.8 1113.9,686.3 1094.0,671.4" fill="#5a5955" stroke="#0d0d0d" stroke-width="1.3" stroke-linejoin="round" />
<polygon points="1075.4,690.8 1095.3,705.8 1094.0,691.6 1082.4,682.9" fill="#63625d" />
<polygon points="1095.3,705.8 1113.9,686.3 1104.7,680.3 1094.0,691.6" fill="#52514d" />
<polygon points="1075.4,690.8 1082.4,682.9 1093.7,672.4 1094.0,671.4" fill="#60605b" />
<polygon points="1082.4,682.9 1094.0,691.6 1104.7,680.3 1093.7,672.4" fill="#9d9688" stroke="#0d0d0d" stroke-width="0.8" stroke-linejoin="round" />
<path d="M1075.4,690.8L1082.4,682.9M1095.3,705.8L1094.0,691.6M1113.9,686.3L1104.7,680.3" stroke="#0d0d0d" stroke-width="0.7"/>
<polygon points="1096.6,706.7 1116.7,721.9 1135.3,702.2 1115.2,687.2" fill="#5a5955" stroke="#0d0d0d" stroke-width="1.3" stroke-linejoin="round" />
<polygon points="1096.6,706.7 1116.7,721.9 1115.3,707.6 1103.6,698.8" fill="#63625d" />
<polygon points="1116.7,721.9 1135.3,702.2 1126.1,696.2 1115.3,707.6" fill="#52514d" />
<polygon points="1096.6,706.7 1103.6,698.8 1114.9,688.2 1115.2,687.2" fill="#60605b" />
<polygon points="1103.6,698.8 1115.3,707.6 1126.1,696.2 1114.9,688.2" fill="#9d9688" stroke="#0d0d0d" stroke-width="0.8" stroke-linejoin="round" />
<path d="M1096.6,706.7L1103.6,698.8M1116.7,721.9L1115.3,707.6M1135.3,702.2L1126.1,696.2" stroke="#0d0d0d" stroke-width="0.7"/>
<polygon points="726.4,457.9 754.5,479.4 772.0,462.3 743.8,440.9" fill="#5a5955" stroke="#0d0d0d" stroke-width="1.3" stroke-linejoin="round" />
<polygon points="726.4,457.9 754.5,479.4 758.1,466.1 736.4,449.6" fill="#63625d" />
<polygon points="754.5,479.4 772.0,462.3 765.2,458.4 758.1,466.1" fill="#52514d" />
<polygon points="726.4,457.9 736.4,449.6 743.5,441.9 743.8,440.9" fill="#60605b" />
<polygon points="736.4,449.6 758.1,466.1 765.2,458.4 743.5,441.9" fill="#9d9688" stroke="#0d0d0d" stroke-width="0.8" stroke-linejoin="round" />
<path d="M726.4,457.9L736.4,449.6M754.5,479.4L758.1,466.1M772.0,462.3L765.2,458.4" stroke="#0d0d0d" stroke-width="0.7"/>
<polygon points="755.3,480.0 771.4,492.3 789.0,475.1 772.8,462.8" fill="#5a5955" stroke="#0d0d0d" stroke-width="1.3" stroke-linejoin="round" />
<polygon points="755.3,480.0 771.4,492.3 771.2,480.2 761.8,473.1" fill="#63625d" />
<polygon points="771.4,492.3 789.0,475.1 781.4,470.2 771.2,480.2" fill="#52514d" />
<polygon points="755.3,480.0 761.8,473.1 772.5,463.8 772.8,462.8" fill="#60605b" />
<polygon points="761.8,473.1 771.2,480.2 781.4,470.2 772.5,463.8" fill="#9d9688" stroke="#0d0d0d" stroke-width="0.8" stroke-linejoin="round" />
<path d="M755.3,480.0L761.8,473.1M771.4,492.3L771.2,480.2M789.0,475.1L781.4,470.2" stroke="#0d0d0d" stroke-width="0.7"/>
<polygon points="773.2,493.7 789.5,506.1 807.1,488.8 790.8,476.4" fill="#5a5955" stroke="#0d0d0d" stroke-width="1.3" stroke-linejoin="round" />
<polygon points="773.2,493.7 789.5,506.1 789.2,494.0 779.8,486.7" fill="#63625d" />
<polygon points="789.5,506.1 807.1,488.8 799.5,483.9 789.2,494.0" fill="#52514d" />
<polygon points="773.2,493.7 779.8,486.7 790.5,477.4 790.8,476.4" fill="#60605b" />
<polygon points="779.8,486.7 789.2,494.0 799.5,483.9 790.5,477.4" fill="#9d9688" stroke="#0d0d0d" stroke-width="0.8" stroke-linejoin="round" />
<path d="M773.2,493.7L779.8,486.7M789.5,506.1L789.2,494.0M807.1,488.8L799.5,483.9" stroke="#0d0d0d" stroke-width="0.7"/>
<polygon points="791.3,507.5 807.8,520.1 825.5,502.6 808.9,490.1" fill="#5a5955" stroke="#0d0d0d" stroke-width="1.3" stroke-linejoin="round" />
<polygon points="791.3,507.5 807.8,520.1 807.5,507.8 797.9,500.5" fill="#63625d" />
<polygon points="807.8,520.1 825.5,502.6 817.7,497.7 807.5,507.8" fill="#52514d" />
<polygon points="791.3,507.5 797.9,500.5 808.6,491.1 808.9,490.1" fill="#60605b" />
<polygon points="797.9,500.5 807.5,507.8 817.7,497.7 808.6,491.1" fill="#9d9688" stroke="#0d0d0d" stroke-width="0.8" stroke-linejoin="round" />
<path d="M791.3,507.5L797.9,500.5M807.8,520.1L807.5,507.8M825.5,502.6L817.7,497.7" stroke="#0d0d0d" stroke-width="0.7"/>
<polygon points="809.6,521.5 826.3,534.2 844.0,516.6 827.3,504.0" fill="#5a5955" stroke="#0d0d0d" stroke-width="1.3" stroke-linejoin="round" />
<polygon points="809.6,521.5 826.3,534.2 825.9,521.8 816.2,514.5" fill="#63625d" />
<polygon points="826.3,534.2 844.0,516.6 836.2,511.6 825.9,521.8" fill="#52514d" />
<polygon points="809.6,521.5 816.2,514.5 827.0,505.0 827.3,504.0" fill="#60605b" />
<polygon points="816.2,514.5 825.9,521.8 836.2,511.6 827.0,505.0" fill="#9d9688" stroke="#0d0d0d" stroke-width="0.8" stroke-linejoin="round" />
<path d="M809.6,521.5L816.2,514.5M826.3,534.2L825.9,521.8M844.0,516.6L836.2,511.6" stroke="#0d0d0d" stroke-width="0.7"/>
<polygon points="828.1,535.6 844.9,548.5 862.7,530.7 845.8,518.0" fill="#5a5955" stroke="#0d0d0d" stroke-width="1.3" stroke-linejoin="round" />
<polygon points="828.1,535.6 844.9,548.5 844.5,536.0 834.8,528.5" fill="#63625d" />
<polygon points="844.9,548.5 862.7,530.7 854.8,525.7 844.5,536.0" fill="#52514d" />
<polygon points="828.1,535.6 834.8,528.5 845.5,519.0 845.8,518.0" fill="#60605b" />
<polygon points="834.8,528.5 844.5,536.0 854.8,525.7 845.5,519.0" fill="#9d9688" stroke="#0d0d0d" stroke-width="0.8" stroke-linejoin="round" />
<path d="M828.1,535.6L834.8,528.5M844.9,548.5L844.5,536.0M862.7,530.7L854.8,525.7" stroke="#0d0d0d" stroke-width="0.7"/>
<polygon points="846.8,549.9 863.8,562.8 881.6,545.0 864.5,532.1" fill="#5a5955" stroke="#0d0d0d" stroke-width="1.3" stroke-linejoin="round" />
<polygon points="846.8,549.9 863.8,562.8 863.3,550.2 853.4,542.7" fill="#63625d" />
<polygon points="863.8,562.8 881.6,545.0 873.6,539.9 863.3,550.2" fill="#52514d" />
<polygon points="846.8,549.9 853.4,542.7 864.2,533.1 864.5,532.1" fill="#60605b" />
<polygon points="853.4,542.7 863.3,550.2 873.6,539.9 864.2,533.1" fill="#9d9688" stroke="#0d0d0d" stroke-width="0.8" stroke-linejoin="round" />
<path d="M846.8,549.9L853.4,542.7M863.8,562.8L863.3,550.2M881.6,545.0L873.6,539.9" stroke="#0d0d0d" stroke-width="0.7"/>
<polygon points="865.6,564.3 882.8,577.4 900.6,559.4 883.4,546.4" fill="#5a5955" stroke="#0d0d0d" stroke-width="1.3" stroke-linejoin="round" />
<polygon points="865.6,564.3 882.8,577.4 882.3,564.7 872.3,557.1" fill="#63625d" />
<polygon points="882.8,577.4 900.6,559.4 892.6,554.2 882.3,564.7" fill="#52514d" />
<polygon points="865.6,564.3 872.3,557.1 883.1,547.4 883.4,546.4" fill="#60605b" />
<polygon points="872.3,557.1 882.3,564.7 892.6,554.2 883.1,547.4" fill="#9d9688" stroke="#0d0d0d" stroke-width="0.8" stroke-linejoin="round" />
<path d="M865.6,564.3L872.3,557.1M882.8,577.4L882.3,564.7M900.6,559.4L892.6,554.2" stroke="#0d0d0d" stroke-width="0.7"/>
<polygon points="884.7,578.8 902.0,592.0 919.9,574.0 902.5,560.8" fill="#5a5955" stroke="#0d0d0d" stroke-width="1.3" stroke-linejoin="round" />
<polygon points="884.7,578.8 902.0,592.0 901.4,579.2 891.4,571.6" fill="#63625d" />
<polygon points="902.0,592.0 919.9,574.0 911.8,568.7 901.4,579.2" fill="#52514d" />
<polygon points="884.7,578.8 891.4,571.6 902.2,561.8 902.5,560.8" fill="#60605b" />
<polygon points="891.4,571.6 901.4,579.2 911.8,568.7 902.2,561.8" fill="#9d9688" stroke="#0d0d0d" stroke-width="0.8" stroke-linejoin="round" />
<path d="M884.7,578.8L891.4,571.6M902.0,592.0L901.4,579.2M919.9,574.0L911.8,568.7" stroke="#0d0d0d" stroke-width="0.7"/>
<polygon points="903.9,593.5 921.4,606.9 939.4,588.6 921.8,575.4" fill="#5a5955" stroke="#0d0d0d" stroke-width="1.3" stroke-linejoin="round" />
<polygon points="903.9,593.5 921.4,606.9 920.8,593.9 910.6,586.2" fill="#63625d" />
<polygon points="921.4,606.9 939.4,588.6 931.2,583.4 920.8,593.9" fill="#52514d" />
<polygon points="903.9,593.5 910.6,586.2 921.5,576.4 921.8,575.4" fill="#60605b" />
<polygon points="910.6,586.2 920.8,593.9 931.2,583.4 921.5,576.4" fill="#9d9688" stroke="#0d0d0d" stroke-width="0.8" stroke-linejoin="round" />
<path d="M903.9,593.5L910.6,586.2M921.4,606.9L920.8,593.9M939.4,588.6L931.2,583.4" stroke="#0d0d0d" stroke-width="0.7"/>
<polygon points="923.4,608.3 941.0,621.8 959.0,603.5 941.3,590.1" fill="#5a5955" stroke="#0d0d0d" stroke-width="1.3" stroke-linejoin="round" />
<polygon points="923.4,608.3 941.0,621.8 940.3,608.8 930.1,601.0" fill="#63625d" />
<polygon points="941.0,621.8 959.0,603.5 950.8,598.2 940.3,608.8" fill="#52514d" />
<polygon points="923.4,608.3 930.1,601.0 941.0,591.1 941.3,590.1" fill="#60605b" />
<polygon points="930.1,601.0 940.3,608.8 950.8,598.2 941.0,591.1" fill="#9d9688" stroke="#0d0d0d" stroke-width="0.8" stroke-linejoin="round" />
<path d="M923.4,608.3L930.1,601.0M941.0,621.8L940.3,608.8M959.0,603.5L950.8,598.2" stroke="#0d0d0d" stroke-width="0.7"/>
<polygon points="943.0,623.3 960.9,636.9 978.9,618.5 961.0,605.0" fill="#5a5955" stroke="#0d0d0d" stroke-width="1.3" stroke-linejoin="round" />
<polygon points="943.0,623.3 960.9,636.9 960.1,623.8 949.7,615.9" fill="#63625d" />
<polygon points="960.9,636.9 978.9,618.5 970.5,613.1 960.1,623.8" fill="#52514d" />
<polygon points="943.0,623.3 949.7,615.9 960.7,606.0 961.0,605.0" fill="#60605b" />
<polygon points="949.7,615.9 960.1,623.8 970.5,613.1 960.7,606.0" fill="#9d9688" stroke="#0d0d0d" stroke-width="0.8" stroke-linejoin="round" />
<path d="M943.0,623.3L949.7,615.9M960.9,636.9L960.1,623.8M978.9,618.5L970.5,613.1" stroke="#0d0d0d" stroke-width="0.7"/>
<polygon points="962.7,638.4 1003.2,669.3 1021.3,650.5 980.8,619.9" fill="#5a5955" stroke="#0d0d0d" stroke-width="1.3" stroke-linejoin="round" />
<polygon points="962.7,638.4 1003.2,669.3 1006.2,654.6 973.0,629.4" fill="#63625d" />
<polygon points="1003.2,669.3 1021.3,650.5 1013.7,646.0 1006.2,654.6" fill="#52514d" />
<polygon points="962.7,638.4 973.0,629.4 980.5,620.9 980.8,619.9" fill="#60605b" />
<polygon points="973.0,629.4 1006.2,654.6 1013.7,646.0 980.5,620.9" fill="#9d9688" stroke="#0d0d0d" stroke-width="0.8" stroke-linejoin="round" />
<path d="M962.7,638.4L973.0,629.4M1003.2,669.3L1006.2,654.6M1021.3,650.5L1013.7,646.0" stroke="#0d0d0d" stroke-width="0.7"/>
<polygon points="1014.9,678.9 1034.3,693.7 1052.9,674.4 1033.4,659.7" fill="#5a5955" stroke="#0d0d0d" stroke-width="1.3" stroke-linejoin="round" />
<polygon points="1014.9,678.9 1034.3,693.7 1033.1,679.7 1021.9,671.1" fill="#63625d" />
<polygon points="1034.3,693.7 1052.9,674.4 1043.9,668.5 1033.1,679.7" fill="#52514d" />
<polygon points="1014.9,678.9 1021.9,671.1 1033.1,660.7 1033.4,659.7" fill="#60605b" />
<polygon points="1021.9,671.1 1033.1,679.7 1043.9,668.5 1033.1,660.7" fill="#9d9688" stroke="#0d0d0d" stroke-width="0.8" stroke-linejoin="round" />
<path d="M1014.9,678.9L1021.9,671.1M1034.3,693.7L1033.1,679.7M1052.9,674.4L1043.9,668.5" stroke="#0d0d0d" stroke-width="0.7"/>
<polygon points="1035.6,694.7 1055.2,709.7 1073.8,690.2 1054.1,675.3" fill="#5a5955" stroke="#0d0d0d" stroke-width="1.3" stroke-linejoin="round" />
<polygon points="1035.6,694.7 1055.2,709.7 1054.0,695.5 1042.6,686.9" fill="#63625d" />
<polygon points="1055.2,709.7 1073.8,690.2 1064.7,684.3 1054.0,695.5" fill="#52514d" />
<polygon points="1035.6,694.7 1042.6,686.9 1053.8,676.3 1054.1,675.3" fill="#60605b" />
<polygon points="1042.6,686.9 1054.0,695.5 1064.7,684.3 1053.8,676.3" fill="#9d9688" stroke="#0d0d0d" stroke-width="0.8" stroke-linejoin="round" />
<path d="M1035.6,694.7L1042.6,686.9M1055.2,709.7L1054.0,695.5M1073.8,690.2L1064.7,684.3" stroke="#0d0d0d" stroke-width="0.7"/>
<polygon points="1056.5,710.6 1076.3,725.8 1095.0,706.2 1075.1,691.1" fill="#5a5955" stroke="#0d0d0d" stroke-width="1.3" stroke-linejoin="round" />
<polygon points="1056.5,710.6 1076.3,725.8 1075.0,711.5 1063.5,702.7" fill="#63625d" />
<polygon points="1076.3,725.8 1095.0,706.2 1085.8,700.2 1075.0,711.5" fill="#52514d" />
<polygon points="1056.5,710.6 1063.5,702.7 1074.8,692.1 1075.1,691.1" fill="#60605b" />
<polygon points="1063.5,702.7 1075.0,711.5 1085.8,700.2 1074.8,692.1" fill="#9d9688" stroke="#0d0d0d" stroke-width="0.8" stroke-linejoin="round" />
<path d="M1056.5,710.6L1063.5,702.7M1076.3,725.8L1075.0,711.5M1095.0,706.2L1085.8,700.2" stroke="#0d0d0d" stroke-width="0.7"/>
<polygon points="1077.6,726.7 1097.6,742.1 1116.3,722.3 1096.2,707.1" fill="#5a5955" stroke="#0d0d0d" stroke-width="1.3" stroke-linejoin="round" />
<polygon points="1077.6,726.7 1097.6,742.1 1096.2,727.7 1084.6,718.8" fill="#63625d" />
<polygon points="1097.6,742.1 1116.3,722.3 1107.1,716.2 1096.2,727.7" fill="#52514d" />
<polygon points="1077.6,726.7 1084.6,718.8 1095.9,708.1 1096.2,707.1" fill="#60605b" />
<polygon points="1084.6,718.8 1096.2,727.7 1107.1,716.2 1095.9,708.1" fill="#9d9688" stroke="#0d0d0d" stroke-width="0.8" stroke-linejoin="round" />
<path d="M1077.6,726.7L1084.6,718.8M1097.6,742.1L1096.2,727.7M1116.3,722.3L1107.1,716.2" stroke="#0d0d0d" stroke-width="0.7"/>
<polygon points="760.1,514.8 776.9,527.8 794.6,510.3 777.8,497.5" fill="#5a5955" stroke="#0d0d0d" stroke-width="1.3" stroke-linejoin="round" />
<polygon points="760.1,514.8 776.9,527.8 776.5,515.4 766.7,507.8" fill="#63625d" />
<polygon points="776.9,527.8 794.6,510.3 786.7,505.2 776.5,515.4" fill="#52514d" />
<polygon points="760.1,514.8 766.7,507.8 777.5,498.5 777.8,497.5" fill="#60605b" />
<polygon points="766.7,507.8 776.5,515.4 786.7,505.2 777.5,498.5" fill="#9d9688" stroke="#0d0d0d" stroke-width="0.8" stroke-linejoin="round" />
<path d="M760.1,514.8L766.7,507.8M776.9,527.8L776.5,515.4M794.6,510.3L786.7,505.2" stroke="#0d0d0d" stroke-width="0.7"/>
<polygon points="777.5,528.3 925.8,642.7 943.8,624.3 795.2,510.8" fill="#5a5955" stroke="#0d0d0d" stroke-width="1.3" stroke-linejoin="round" />
<polygon points="777.5,528.3 925.8,642.7 929.0,628.3 787.7,519.7" fill="#63625d" />
<polygon points="925.8,642.7 943.8,624.3 936.4,619.9 929.0,628.3" fill="#52514d" />
<polygon points="777.5,528.3 787.7,519.7 794.9,511.8 795.2,510.8" fill="#60605b" />
<polygon points="787.7,519.7 929.0,628.3 936.4,619.9 794.9,511.8" fill="#9d9688" stroke="#0d0d0d" stroke-width="0.8" stroke-linejoin="round" />
<path d="M777.5,528.3L787.7,519.7M925.8,642.7L929.0,628.3M943.8,624.3L936.4,619.9" stroke="#0d0d0d" stroke-width="0.7"/>
<polygon points="995.9,698.6 1015.3,713.5 1034.0,694.1 1014.5,679.3" fill="#5a5955" stroke="#0d0d0d" stroke-width="1.3" stroke-linejoin="round" />
<polygon points="995.9,698.6 1015.3,713.5 1014.2,699.4 1002.9,690.8" fill="#63625d" />
<polygon points="1015.3,713.5 1034.0,694.1 1025.0,688.2 1014.2,699.4" fill="#52514d" />
<polygon points="995.9,698.6 1002.9,690.8 1014.2,680.3 1014.5,679.3" fill="#60605b" />
<polygon points="1002.9,690.8 1014.2,699.4 1025.0,688.2 1014.2,680.3" fill="#9d9688" stroke="#0d0d0d" stroke-width="0.8" stroke-linejoin="round" />
<path d="M995.9,698.6L1002.9,690.8M1015.3,713.5L1014.2,699.4M1034.0,694.1L1025.0,688.2" stroke="#0d0d0d" stroke-width="0.7"/>
<polygon points="1016.5,714.5 1036.1,729.6 1054.8,710.1 1035.2,695.1" fill="#5a5955" stroke="#0d0d0d" stroke-width="1.3" stroke-linejoin="round" />
<polygon points="1016.5,714.5 1036.1,729.6 1034.9,715.4 1023.6,706.6" fill="#63625d" />
<polygon points="1036.1,729.6 1054.8,710.1 1045.8,704.1 1034.9,715.4" fill="#52514d" />
<polygon points="1016.5,714.5 1023.6,706.6 1034.9,696.1 1035.2,695.1" fill="#60605b" />
<polygon points="1023.6,706.6 1034.9,715.4 1045.8,704.1 1034.9,696.1" fill="#9d9688" stroke="#0d0d0d" stroke-width="0.8" stroke-linejoin="round" />
<path d="M1016.5,714.5L1023.6,706.6M1036.1,729.6L1034.9,715.4M1054.8,710.1L1045.8,704.1" stroke="#0d0d0d" stroke-width="0.7"/>
<polygon points="1037.4,730.6 1078.4,762.3 1097.2,742.5 1056.1,711.0" fill="#5a5955" stroke="#0d0d0d" stroke-width="1.3" stroke-linejoin="round" />
<polygon points="1037.4,730.6 1078.4,762.3 1081.3,747.0 1047.8,721.3" fill="#63625d" />
<polygon points="1078.4,762.3 1097.2,742.5 1089.3,737.6 1081.3,747.0" fill="#52514d" />
<polygon points="1037.4,730.6 1047.8,721.3 1055.8,712.0 1056.1,711.0" fill="#60605b" />
<polygon points="1047.8,721.3 1081.3,747.0 1089.3,737.6 1055.8,712.0" fill="#9d9688" stroke="#0d0d0d" stroke-width="0.8" stroke-linejoin="round" />
<path d="M1037.4,730.6L1047.8,721.3M1078.4,762.3L1081.3,747.0M1097.2,742.5L1089.3,737.6" stroke="#0d0d0d" stroke-width="0.7"/>

<g>
 <polygon points="1856,164 1821,186 1825,218 1856,243 1887,219 1892,188" fill="#000" opacity="0.10" filter="url(#blur3)" transform="translate(3,5)"/>
 <polygon points="1856,164 1821,186 1856,213 1892,188" fill="#eeeeee" fill-opacity="0.85" stroke="#9a9a9a" stroke-width="0.8" stroke-dasharray="3,2"/>
 <polygon points="1821,186 1856,213 1856,243 1825,218" fill="#e6e6e6" fill-opacity="0.85" stroke="#9a9a9a" stroke-width="0.8" stroke-dasharray="3,2"/>
 <polygon points="1856,213 1892,188 1887,219 1856,243" fill="#dedede" fill-opacity="0.85" stroke="#9a9a9a" stroke-width="0.8" stroke-dasharray="3,2"/>
 <path d="M1840.7,184.4 L1860.6,198 M1851.2,190.7 L1863.2,181.8 M1858,186.5 L1866.9,191.7" stroke="#6f6f6f" stroke-width="1.3" fill="none"/>
 <path d="M1830.2,204.3 L1847,213.8 M1832.3,207.5 L1833.3,218 M1836.5,209.5 L1837.5,220 M1841.5,212 L1842,221 M1846.5,217 L1847,227.4 M1833,212 L1837,214" stroke="#858585" stroke-width="1.1" fill="none"/>
 <path d="M1868,216.9 L1883.7,205.4 M1872.2,211.7 L1865.9,226.4 M1872,219 L1880,214 L1879,222 L1871,226" stroke="#8a8a8a" stroke-width="1.1" fill="none"/>
 <line x1="1825" y1="218" x2="1820" y2="182" stroke="#5555ee" stroke-width="1.5"/>
 <line x1="1825" y1="218" x2="1861" y2="249" stroke="#ee6666" stroke-width="1.5"/>
 <text x="1812.5" y="180.5" font-size="13" fill="#6b6bf0" font-family='Liberation Sans'>Z</text>
 <text x="1862.5" y="260.5" font-size="13" fill="#f07070" font-family='Liberation Sans'>X</text>
</g>
</g>
</svg>
<!-- title bar -->
<div class="abs" style="left:0;top:0;width:1920px;height:23px;background:#fff"></div>
<div class="abs" style="left:1920px;top:0;width:8px;height:42px;background:#dfe4ec"></div>
<div class="abs" style="left:1920px;top:40px;width:8px;height:1000px;background:#fff;border-radius:6px 0 0 0"></div>
<div class="abs" style="left:1920px;top:86px;width:8px;height:1px;background:#d8d8d8"></div>
<svg class="abs" style="left:3px;top:3px" width="15" height="16"><rect x="0.5" y="0.5" width="14" height="15" rx="2.5" fill="#e8641c"/><rect x="0.5" y="0.5" width="12.5" height="12" rx="2.5" fill="#f58220"/><rect x="1.5" y="11.5" width="12" height="4" fill="#b8481a"/><text x="4" y="10" font-size="9" font-weight="bold" fill="#fff" font-family="Liberation Sans">F</text></svg>
<div class="abs txt" style="left:23px;top:4px;font-size:11.2px;color:#000">Autodesk Fusion 360 (個人用 - 商用利用不可)</div>
<svg class="abs" style="left:1795px;top:3px" width="110" height="16">
 <line x1="4" y1="7.5" x2="14" y2="7.5" stroke="#111" stroke-width="1"/>
 <rect x="49.5" y="4.5" width="8" height="8" fill="none" stroke="#111" stroke-width="1"/>
 <path d="M51.5,4.5 V2.5 H59.5 V10.5 H57.5" fill="none" stroke="#111" stroke-width="1"/>
 <path d="M95,2 L105,12 M105,2 L95,12" stroke="#111" stroke-width="1.1"/>
</svg>
<!-- tab bar -->
<div class="abs" style="left:0;top:23px;width:1918px;height:32px;background:#c9c9c9"></div>
<div class="abs" style="left:193px;top:26px;width:1508px;height:29px;background:#f1f1f1;border-radius:5px 5px 0 0"></div>
<div class="abs" style="left:1705px;top:27px;width:28px;height:28px;background:#bdbdbd;border-radius:4px 4px 0 0"></div>
<svg class="abs" style="left:0;top:23px" width="195" height="32">
 <g fill="#666">
  <rect x="9" y="9" width="4" height="4"/><rect x="14" y="9" width="4" height="4"/><rect x="19" y="9" width="4" height="4"/>
  <rect x="9" y="14" width="4" height="4"/><rect x="14" y="14" width="4" height="4"/><rect x="19" y="14" width="4" height="4"/>
  <rect x="9" y="19" width="4" height="4"/><rect x="14" y="19" width="4" height="4"/><rect x="19" y="19" width="4" height="4"/>
  <path d="M42,8 H51 L55,12 V24 H42Z"/>
  <path d="M61,13 H68 L64.5,17Z"/>
  <path d="M126,11 L121.5,15.5 L126,20" fill="none" stroke="#555" stroke-width="1.8"/><path d="M122,15.5 H127 C131,15.5 133,18 133,22" fill="none" stroke="#555" stroke-width="1.8"/>
  <path d="M140,13 H147 L143.5,17Z"/>
 </g>
 <g fill="#a0a0a0">
  <path d="M87,9 H100 V23 H89 L87,21Z"/>
  <rect x="90" y="10" width="7" height="4" fill="#c9c9c9"/><rect x="91" y="18" width="5" height="5" fill="#c9c9c9"/>
  <path d="M168,11 L172.5,15.5 L168,20" fill="none" stroke="#a0a0a0" stroke-width="1.8"/><path d="M172,15.5 H167 C163,15.5 161,18 161,22" fill="none" stroke="#a0a0a0" stroke-width="1.8"/>
  <path d="M179,13 H186 L182.5,17Z"/>
 </g>
</svg>
<svg class="abs" style="left:895px;top:33px" width="16" height="17"><path d="M8,1 L15,4.5 V12.5 L8,16 L1,12.5 V4.5Z" fill="#f07a1a"/><path d="M8,1 L15,4.5 L8,8 L1,4.5Z" fill="#ffab5a"/><path d="M8,8 L15,4.5 V12.5 L8,16Z" fill="#d85e10"/></svg>
<div class="abs txt" style="left:916px;top:34px;font-size:11.6px;color:#222">PASOPIA v26</div>
<svg class="abs" style="left:1683px;top:34px" width="14" height="14"><path d="M2.5,2.5 L11.5,11.5 M11.5,2.5 L2.5,11.5" stroke="#555" stroke-width="1.5"/></svg>
<svg class="abs" style="left:1705px;top:27px" width="215" height="28">
 <path d="M14,6 V22 M6,14 H22" stroke="#666" stroke-width="2.6"/>
 <circle cx="48" cy="12" r="8" fill="#0696d7"/>
 <path d="M45,11 V17 M42,14 H48 M50,7 V11 M48,9 H52" stroke="#fff" stroke-width="1.5"/>
 <circle cx="81" cy="12" r="7.5" fill="#666" stroke="#666"/><circle cx="81" cy="12" r="6.3" fill="#c9c9c9"/><circle cx="81" cy="12" r="5.3" fill="#666"/>
 <path d="M81,8 V12.5 H84.5" stroke="#ddd" stroke-width="1.3" fill="none"/>
 <path d="M108,18 C109,16 109,14 109,11 C109,7.5 111,5.5 114,5.5 C117,5.5 119,7.5 119,11 C119,14 119,16 121,18Z" fill="#666"/>
 <path d="M112,19 H116 L114,21Z" fill="#666"/>
 <circle cx="119" cy="6.5" r="3" fill="#0696d7"/>
 <circle cx="147" cy="12" r="8" fill="#666"/>
 <text x="143" y="16.5" font-size="12" font-weight="bold" fill="#fff" font-family="Liberation Sans">?</text>
 <defs><linearGradient id="av" x1="0" y1="0" x2="0" y2="1"><stop offset="0" stop-color="#c3cfdf"/><stop offset="1" stop-color="#8c9bb3"/></linearGradient></defs>
 <clipPath id="avc"><circle cx="188" cy="12" r="12"/></clipPath>
 <circle cx="188" cy="12" r="12" fill="url(#av)"/>
 <path clip-path="url(#avc)" d="M178,26 C178,19 183,17.5 185,16.5 C182,13 182,8 183.5,5.5 C185.5,2 190.5,2 192.5,5.5 C194,8 194,13 191,16.5 C193,17.5 198,19 198,26Z" fill="#56657c"/>
</svg>
<!-- toolbar -->
<div class="abs" style="left:0;top:55px;width:1920px;height:85px;background:#f1f1f1"></div>
<div class="abs" style="left:12px;top:65px;width:109px;height:61px;border:1.5px solid #d6d6d6;border-radius:5px"></div>
<div class="abs txt" style="left:43px;top:89px;font-size:11px;color:#222">デザイン</div>
<svg class="abs" style="left:82px;top:92px" width="8" height="6"><path d="M0.5,1 H7.5 L4,5Z" fill="#222"/></svg>
<div class="abs" style="left:139px;top:75px;width:55px;height:2.5px;background:#0696d7;border-radius:1px"></div>
<div class="abs txt tab" style="left:150px;top:60px;color:#0696d7">ソリッド</div>
<div class="abs txt tab" style="left:228px;top:60px">サーフェス</div>
<div class="abs txt tab" style="left:311px;top:60px">メッシュ</div>
<div class="abs txt tab" style="left:389px;top:60px">フォーム</div>
<div class="abs txt tab" style="left:467px;top:60px">シート メタル</div>
<div class="abs txt tab" style="left:565px;top:60px">プラスチック</div>
<div class="abs txt tab" style="left:658px;top:60px">ユーティリティ</div>
<div class="abs txt lab" style="left:222px;top:120px">作成</div>
<div class="abs txt lab" style="left:469px;top:120px">修正</div>
<div class="abs txt lab" style="left:642px;top:120px">アセンブリ</div>
<div class="abs txt lab" style="left:732px;top:120px">構築</div>
<div class="abs txt lab" style="left:790px;top:120px">検査</div>
<div class="abs txt lab" style="left:866px;top:120px">挿入</div>
<div class="abs txt lab" style="left:946px;top:120px">選択</div>
<svg class="abs" style="left:0;top:55px" width="1000" height="85">
 <g fill="#222">
  <path d="M246,69 H253 L249.5,73Z"/><path d="M493,69 H500 L496.5,73Z"/><path d="M686,69 H693 L689.5,73Z"/>
  <path d="M756,69 H763 L759.5,73Z"/><path d="M814,69 H821 L817.5,73Z"/><path d="M890,69 H897 L893.5,73Z"/><path d="M970,69 H977 L973.5,73Z"/>
 </g>
 <g stroke="#d6d6d6" stroke-width="1.5">
  <line x1="351" y1="27" x2="351" y2="77"/><line x1="620" y1="27" x2="620" y2="77"/><line x1="717" y1="27" x2="717" y2="77"/>
  <line x1="776" y1="27" x2="776" y2="77"/><line x1="835" y1="27" x2="835" y2="77"/><line x1="932" y1="27" x2="932" y2="77"/>
 </g>
 <!-- sketch -->
 <g transform="translate(0,-55)">
 <rect x="139" y="84" width="26" height="26" fill="none" stroke="#444" stroke-width="1" stroke-dasharray="4,2"/>
 <g fill="#444"><rect x="137" y="82" width="3" height="3"/><rect x="164" y="82" width="3" height="3"/><rect x="137" y="109" width="3" height="3"/>
 <rect x="144" y="89" width="3" height="3"/><rect x="157" y="89" width="3" height="3"/><rect x="144" y="102" width="3" height="3"/></g>
 <path d="M145.5,92 V101 M147,90.5 H156 M147,104 C153,103 158,98 158.5,92" fill="none" stroke="#444" stroke-width="0.9"/>
 <rect x="153" y="110" width="14" height="8" fill="#f1f1f1"/>
 <path d="M161.5,100 V114 M154.5,107 H168.5" stroke="#21a63a" stroke-width="4"/>
 <!-- extrude -->
 <path d="M181,108 V114 H199 L204,109 V104Z" fill="#b9b9b9"/>
 <path d="M181,88 L186,82 H204 L199,88Z" fill="#8fccf5"/>
 <rect x="181" y="88" width="18" height="20" fill="#64aee3"/>
 <path d="M199,88 L204,82 V103 L199,108Z" fill="#3f8fca"/>
 <path d="M208.5,108 V85 M205.5,89 L208.5,83 L211.5,89Z" stroke="#222" stroke-width="1.2" fill="#222"/>
 <!-- revolve -->
 <path d="M223,99 C230,90 248,90 254,99 L254,107 L248,111 C243,104 233,104 228,111 L223,107Z" fill="#5aa4dc"/>
 <path d="M223,99 C230,91 247,91 254,99 L248,103 C243,97 233,97 228,103Z" fill="#8ccbf5"/>
 <path d="M248,103 L254,99 V107 L248,111Z" fill="#fff" stroke="#333" stroke-width="0.8"/>
 <path d="M225,93 C233,85 245,84 252,90" fill="none" stroke="#222" stroke-width="1.1"/>
 <path d="M223,95 L229,91 L226,89Z" fill="#222"/>
 <!-- hole -->
 <path d="M266,88 L272,82 H298 V108 L292,114 H266Z" fill="#d9d9d9" stroke="#555" stroke-width="1"/>
 <path d="M292,88 L298,82 V108 L292,114Z" fill="#c4c4c4" stroke="#555" stroke-width="0.8"/>
 <path d="M266,88 H292 V114" fill="none" stroke="#555" stroke-width="0.8"/>
 <circle cx="279.5" cy="100.5" r="8" fill="#e8e8e8" stroke="#444" stroke-width="1"/>
 <circle cx="279.5" cy="100.5" r="6" fill="#5ba7df"/>
 <path d="M283,95 C286,98 285,103 281,104 C284,101 284,97 283,95Z" fill="#e8e8e8"/>
 <!-- pattern -->
 <rect x="309.5" y="85" width="6" height="6" fill="#fff" stroke="#333" stroke-width="1"/>
 <rect x="330.5" y="84.5" width="6.5" height="6.5" fill="#5ba7df"/>
 <rect x="309.5" y="105.5" width="6.5" height="6.5" fill="#5ba7df"/>
 <rect x="330.5" y="105.5" width="6.5" height="6.5" fill="#5ba7df"/>
 <path d="M316,88 H330 M312.5,91 V105 M316,108.5 H330" stroke="#333" stroke-width="1"/>
 <!-- press pull -->
 <path d="M364,88 L369,82 H375 V114 H364Z" fill="#e0e0e0" stroke="#555" stroke-width="0.8"/>
 <path d="M371,88 L376,82 H385 L380,88Z" fill="#8ccbf5"/>
 <rect x="371" y="88" width="9" height="26" fill="#64aee3"/>
 <path d="M380,88 L385,82 V108 L380,114Z" fill="#3f8fca"/>
 <path d="M380,99 H392 M389,96 L393,99 L389,102" stroke="#222" stroke-width="1.2" fill="none"/>
 <!-- fillet -->
 <path d="M405.9,113.6 V89.6 L418.3,82.3 H422.6 C431,82.3 437.9,89 437.9,96.9 V107 L430.6,113.6Z" fill="#d4d4d4" stroke="#555" stroke-width="0.9"/>
 <path d="M405.9,89.6 H417 C424,89.6 430.6,96 430.6,104 V113.6 H405.9Z" fill="#dedede" stroke="#555" stroke-width="0.6"/>
 <path d="M418.3,82.3 H422.6 C431,82.3 437.9,89 437.9,96.9 L432.5,101.5 C431.5,94 426,88 419,87.5Z" fill="#5ba7df"/>
 <!-- shell -->
 <path d="M449.5,89.6 L456.8,82.3 H480.7 L473.4,89.6Z" fill="#e6e6e6" stroke="#555" stroke-width="0.8"/>
 <path d="M473.4,89.6 L480.7,82.3 V106.3 L473.4,113.6Z" fill="#c2c2c2" stroke="#555" stroke-width="0.8"/>
 <rect x="449.5" y="89.6" width="23.9" height="24" fill="#e0e0e0" stroke="#555" stroke-width="0.8"/>
 <rect x="453.1" y="92.5" width="16.7" height="17.5" fill="#fff"/>
 <path d="M453.8,94 H460 V104 H469 V109.3 H453.8Z" fill="#3f8fca"/>
 <path d="M460,94 H468.5 V104 H460Z" fill="#9bd3f7" opacity="0.0"/>
 <path d="M460,103 L469,101 V109.3 H453.8 Z" fill="#8ccbf5"/>
 <!-- combine -->
 <path d="M491.6,96.1 L495.2,92.5 H510 L506.4,96.1Z" fill="#8ccbf5"/>
 <rect x="491.6" y="96.1" width="18.9" height="17.5" fill="#64aee3"/>
 <path d="M510.5,103.4 L514.1,99.8 V110 L510.5,113.6Z" fill="#3f8fca"/>
 <path d="M501.8,86 L505.4,82.3 H523.5 L519.9,86Z" fill="#8ccbf5"/>
 <rect x="501.8" y="86" width="18.1" height="17.4" fill="#64aee3"/>
 <path d="M519.9,86 L523.5,82.3 V99.8 L519.9,103.4Z" fill="#3f8fca"/>
 <!-- split -->
 <path d="M536.6,86 L540.2,82.3 H565 L559.1,86Z" fill="#8ccbf5"/>
 <rect x="536.6" y="86" width="22.5" height="11.6" fill="#64aee3"/>
 <path d="M559.1,86 L565,82.3 V93.2 L559.1,97.6Z" fill="#3f8fca"/>
 <path d="M535.2,100.5 H559.1 L567.1,92.5" stroke="#1e88d8" stroke-width="1.3" fill="none"/>
 <path d="M537.3,102.7 H559.1 L565,98.3 V107.7 L559.1,112.8 H537.3Z" fill="#d6d6d6" stroke="#555" stroke-width="0.8"/>
 <path d="M559.1,102.7 V112.8" stroke="#555" stroke-width="0.6"/>
 <!-- move -->
 <path d="M594,84 V112 M580,98 H608" stroke="#222" stroke-width="2"/>
 <path d="M594,82 L589,88 H599Z M594,114 L589,108 H599Z M578,98 L584,93 V103Z M610,98 L604,93 V103Z" fill="#222"/>
 <!-- assembly -->
 <rect x="632" y="104" width="13" height="10" fill="#dcdcdc" stroke="#555" stroke-width="0.7"/>
 <rect x="645" y="104" width="13" height="10" fill="#dcdcdc" stroke="#555" stroke-width="0.7"/>
 <path d="M658,104 L663,99 V109 L658,114Z" fill="#c4c4c4"/>
 <rect x="632" y="91" width="12" height="13" fill="#5ba7df"/>
 <path d="M632,91 L636,87 H648 L644,91Z" fill="#8ccbf5"/>
 <path d="M656,82 L658,88 L664,86 L660,91 L665,95 L659,95 L658,101 L655,96 L650,99 L652,93 L647,90 L653,89Z" fill="#f5a623"/>
 <!-- joint -->
 <path d="M678,112 V90 C678,86 686,84 688,88 V106 L684,112Z" fill="#dcdcdc" stroke="#555" stroke-width="0.8"/>
 <path d="M694,95 L702,90 L706,94 V112 L696,106Z" fill="#dcdcdc" stroke="#555" stroke-width="0.8"/>
 <path d="M696,88 V98 M682,102 V108" stroke="#1e88d8" stroke-width="1"/>
 <!-- construct -->
 <path d="M733,112 V88 L741,82 V108Z" fill="#e0e0e0" stroke="#555" stroke-width="0.8"/>
 <path d="M740,110 V88 L748,82 V104Z" fill="#5fbf6a"/>
 <path d="M753,112 V88 L762,82 V106Z" fill="#e49a6a"/>
 <!-- inspect -->
 <path d="M792,90 V96 M820,90 V96 M793,93 H819" stroke="#333" stroke-width="1"/>
 <path d="M793,93 L797,91 V95Z M819,93 L815,91 V95Z" fill="#333"/>
 <rect x="792" y="98" width="28" height="7" fill="#f5a623"/>
 <path d="M795,98 V101 M799,98 V100 M803,98 V101 M807,98 V100 M811,98 V101 M815,98 V100" stroke="#8a5a00" stroke-width="0.8"/>
 <!-- insert bolt (faded) -->
 <rect x="849" y="82" width="24" height="7" rx="2" fill="#dbe7ef"/>
 <rect x="853" y="89" width="15" height="24" fill="#dbe7ef"/>
 <path d="M866,101 V113 M860,107 H872" stroke="#b4dcb8" stroke-width="3.5"/>
 <!-- insert image -->
 <rect x="891" y="83" width="29" height="28" fill="#5ba7df"/>
 <path d="M891,100 C896,94 900,94 905,102 C909,98 914,96 920,101 V111 H891Z" fill="#3a86c4"/>
 <rect x="891" y="83" width="29" height="17" fill="#8ccbf5" opacity="0.5"/>
 <circle cx="912" cy="91" r="3" fill="#f5f0b0"/>
 <!-- select -->
 <rect x="943" y="79" width="38" height="38" fill="#0696d7"/>
 <rect x="948" y="84" width="26" height="20" fill="none" stroke="#9be07a" stroke-width="1" stroke-dasharray="3,2"/>
 <path d="M967,96 L967,112 L971,108 L974,115 L977,113.5 L974,107 L979,107Z" fill="#fff" stroke="#222" stroke-width="0.8"/>
 </g>
</svg>

<div class="abs" style="left:4px;top:144px;width:300px;height:25px;background:#f1f1f1;border:1px solid #c6c6c6"></div>
<svg class="abs" style="left:9px;top:151px" width="12" height="10"><path d="M5,1 L0.5,5 L5,9Z M11,1 L6.5,5 L11,9Z" fill="#222"/></svg>
<div class="abs txt" style="left:29px;top:149px;font-size:12px;color:#555">ブラウザ</div>
<svg class="abs" style="left:281px;top:150px" width="12" height="12"><circle cx="6" cy="6" r="5.5" fill="#222"/><rect x="2.5" y="5.2" width="7" height="1.6" fill="#fff"/></svg>
<div class="abs" style="left:8px;top:174px;width:6px;height:813px;background:#c9c9c9;border-radius:3px 3px 0 0"></div>
<div class="abs" style="left:8px;top:174px;width:6px;height:112px;background:#9c9c9c;border-radius:3px"></div>
<div class="abs row" style="left:40px;top:174px;width:164px;height:20px"></div>
<svg class="abs" style="left:21px;top:178px" width="12" height="12"><defs><linearGradient id="tg" x1="0" x2="1"><stop offset="0" stop-color="#ddd"/><stop offset="1" stop-color="#555"/></linearGradient></defs><path d="M1,11 L11,1 L11,11Z" fill="url(#tg)" stroke="#111" stroke-width="1"/></svg>
<svg class="abs" style="left:43px;top:178px" width="17" height="12"><path d="M0.5,6 Q8.5,-2 16.5,6 Q8.5,14 0.5,6Z" fill="#9a9a9a"/><circle cx="8.5" cy="6" r="3.2" fill="#f1f1f1"/><circle cx="8.5" cy="6" r="1.8" fill="#9a9a9a"/></svg>
<div class="abs" style="left:65px;top:176px;width:114px;height:16px;background:#9a9a9a"></div>
<svg class="abs" style="left:68px;top:176px" width="17" height="16"><path d="M1,4 L4,1 H15 V12 L12,15 H1Z" fill="#e2e5ea" stroke="#222" stroke-width="1"/><path d="M12,4 L15,1 M12,4 V15 M1,4 H12" stroke="#222" stroke-width="1" fill="none"/><path d="M12,4 L15,1 V12 L12,15Z" fill="#c9ced6"/></svg>
<div class="abs txt" style="left:98px;top:177px;font-size:11.5px;color:#fff;font-weight:bold;letter-spacing:-0.3px">PASOPIA v26</div>
<svg class="abs" style="left:182px;top:177px" width="15" height="15"><circle cx="7.5" cy="7.5" r="6.3" fill="#fff" stroke="#222" stroke-width="1.3"/><circle cx="7.5" cy="7.5" r="2.3" fill="#222"/></svg>
<div class="abs row" style="left:58px;top:198px;width:118px;height:20px"></div><svg class="abs" style="left:40px;top:201px" width="11" height="15"><path d="M1.5,1.5 L9.5,7.5 L1.5,13.5Z" fill="#fff" stroke="#222" stroke-width="1.2" stroke-linejoin="round"/></svg><svg class="abs" style="left:61px;top:201px" width="14" height="14"><path d="M13.68,5.70L13.68,8.30L11.59,8.40L11.24,9.25L12.64,10.80L10.80,12.64L9.25,11.24L8.40,11.59L8.30,13.68L5.70,13.68L5.60,11.59L4.75,11.24L3.20,12.64L1.36,10.80L2.76,9.25L2.41,8.40L0.32,8.30L0.32,5.70L2.41,5.60L2.76,4.75L1.36,3.20L3.20,1.36L4.75,2.76L5.60,2.41L5.70,0.32L8.30,0.32L8.40,2.41L9.25,2.76L10.80,1.36L12.64,3.20L11.24,4.75L11.59,5.60Z" fill="#8a8a8a"/><circle cx="7" cy="7" r="2" fill="#f1f1f1"/></svg><div class="abs txt" style="left:87px;top:201px;font-size:11px;color:#333;font-weight:normal">ドキュメントの設定</div>
<div class="abs row" style="left:58px;top:222px;width:126px;height:20px"></div><svg class="abs" style="left:40px;top:225px" width="11" height="15"><path d="M1.5,1.5 L9.5,7.5 L1.5,13.5Z" fill="#fff" stroke="#222" stroke-width="1.2" stroke-linejoin="round"/></svg><svg class="abs" style="left:61px;top:225px" width="17" height="14"><path d="M0.5,0.5 h6 l1.5,1.5 h0 V3 H0.5Z" fill="#9c9c9c"/><rect x="0.5" y="3.5" width="16" height="10" fill="#9c9c9c"/><rect x="8" y="1" width="8.5" height="2.5" fill="#9c9c9c"/></svg><div class="abs txt" style="left:91px;top:225px;font-size:11px;color:#333;font-weight:normal">名前の付いたビュー</div>
<div class="abs row" style="left:58px;top:246px;width:91px;height:20px"></div><svg class="abs" style="left:40px;top:249px" width="11" height="15"><path d="M1.5,1.5 L9.5,7.5 L1.5,13.5Z" fill="#fff" stroke="#222" stroke-width="1.2" stroke-linejoin="round"/></svg><svg class="abs" style="left:61px;top:249px" width="17" height="14"><path d="M1,7 Q8.5,0 16,7 Q8.5,14 1,7Z" fill="none" stroke="#a8a8a8" stroke-width="1.1"/><circle cx="8.5" cy="7" r="2.6" fill="none" stroke="#a8a8a8" stroke-width="1"/><line x1="3" y1="1.5" x2="14" y2="12.5" stroke="#a8a8a8" stroke-width="1.1"/></svg><svg class="abs" style="left:86px;top:249px" width="17" height="14"><path d="M0.5,0.5 h6 l1.5,1.5 h0 V3 H0.5Z" fill="#9c9c9c"/><rect x="0.5" y="3.5" width="16" height="10" fill="#9c9c9c"/><rect x="8" y="1" width="8.5" height="2.5" fill="#9c9c9c"/></svg><div class="abs txt" style="left:116px;top:249px;font-size:11px;color:#333;font-weight:normal">原点</div>
<div class="abs row" style="left:58px;top:270px;width:95px;height:20px"></div><svg class="abs" style="left:39px;top:274px" width="12" height="12"><defs><linearGradient id="tg" x1="0" x2="1"><stop offset="0" stop-color="#ddd"/><stop offset="1" stop-color="#555"/></linearGradient></defs><path d="M1,11 L11,1 L11,11Z" fill="url(#tg)" stroke="#111" stroke-width="1"/></svg><svg class="abs" style="left:61px;top:274px" width="17" height="12"><path d="M0.5,6 Q8.5,-2 16.5,6 Q8.5,14 0.5,6Z" fill="#9a9a9a"/><circle cx="8.5" cy="6" r="3.2" fill="#f1f1f1"/><circle cx="8.5" cy="6" r="1.8" fill="#9a9a9a"/></svg><svg class="abs" style="left:86px;top:273px" width="17" height="14"><path d="M0.5,0.5 h6 l1.5,1.5 h0 V3 H0.5Z" fill="#9c9c9c"/><rect x="0.5" y="3.5" width="16" height="10" fill="#9c9c9c"/><rect x="8" y="1" width="8.5" height="2.5" fill="#9c9c9c"/></svg><div class="abs txt" style="left:116px;top:273px;font-size:11px;color:#333;font-weight:normal">ボディ</div>
<div class="abs row" style="left:76px;top:294px;width:102px;height:20px"></div><svg class="abs" style="left:79px;top:298px" width="17" height="12"><path d="M0.5,6 Q8.5,-2 16.5,6 Q8.5,14 0.5,6Z" fill="#9a9a9a"/><circle cx="8.5" cy="6" r="3.2" fill="#f1f1f1"/><circle cx="8.5" cy="6" r="1.8" fill="#9a9a9a"/></svg><svg class="abs" style="left:104px;top:297px" width="17" height="14"><path d="M0.5,0.5 h6 l1.5,1.5 h0 V3 H0.5Z" fill="#9c9c9c"/><rect x="0.5" y="3.5" width="16" height="10" fill="#9c9c9c"/><rect x="8" y="1" width="8.5" height="2.5" fill="#9c9c9c"/></svg><div class="abs txt" style="left:134px;top:297px;font-size:11px;color:#333;font-weight:normal">グループ1</div>
<div class="abs row" style="left:76px;top:318px;width:114px;height:20px"></div><svg class="abs" style="left:79px;top:322px" width="17" height="12"><path d="M0.5,6 Q8.5,-2 16.5,6 Q8.5,14 0.5,6Z" fill="#9a9a9a"/><circle cx="8.5" cy="6" r="3.2" fill="#f1f1f1"/><circle cx="8.5" cy="6" r="1.8" fill="#9a9a9a"/></svg><svg class="abs" style="left:104px;top:320px" width="17" height="17"><defs><linearGradient id="bg104328" x1="0" x2="1"><stop offset="0" stop-color="#c8cdd4"/><stop offset="0.6" stop-color="#e9ecef"/><stop offset="1" stop-color="#b9bec6"/></linearGradient></defs><rect x="1" y="1" width="15" height="15" rx="4" fill="#f4f5f7" stroke="#333" stroke-width="1.2"/><rect x="3" y="6" width="11" height="9" fill="url(#bg104328)"/></svg><div class="abs txt" style="left:134px;top:321px;font-size:11px;color:#333;font-weight:normal">ボディ底面</div>
<div class="abs row" style="left:76px;top:342px;width:119px;height:20px"></div><svg class="abs" style="left:79px;top:346px" width="17" height="12"><path d="M0.5,6 Q8.5,-2 16.5,6 Q8.5,14 0.5,6Z" fill="#9a9a9a"/><circle cx="8.5" cy="6" r="3.2" fill="#f1f1f1"/><circle cx="8.5" cy="6" r="1.8" fill="#9a9a9a"/></svg><svg class="abs" style="left:104px;top:344px" width="17" height="17"><defs><linearGradient id="bg104352" x1="0" x2="1"><stop offset="0" stop-color="#c8cdd4"/><stop offset="0.6" stop-color="#e9ecef"/><stop offset="1" stop-color="#b9bec6"/></linearGradient></defs><rect x="1" y="1" width="15" height="15" rx="4" fill="#f4f5f7" stroke="#333" stroke-width="1.2"/><rect x="3" y="6" width="11" height="9" fill="url(#bg104352)"/></svg><div class="abs txt" style="left:134px;top:345px;font-size:11px;color:#333;font-weight:normal">キーボード枠</div>
<div class="abs row" style="left:76px;top:366px;width:107px;height:20px"></div><svg class="abs" style="left:79px;top:370px" width="17" height="12"><path d="M0.5,6 Q8.5,-2 16.5,6 Q8.5,14 0.5,6Z" fill="#9a9a9a"/><circle cx="8.5" cy="6" r="3.2" fill="#f1f1f1"/><circle cx="8.5" cy="6" r="1.8" fill="#9a9a9a"/></svg><svg class="abs" style="left:104px;top:368px" width="17" height="17"><defs><linearGradient id="bg104376" x1="0" x2="1"><stop offset="0" stop-color="#c8cdd4"/><stop offset="0.6" stop-color="#e9ecef"/><stop offset="1" stop-color="#b9bec6"/></linearGradient></defs><rect x="1" y="1" width="15" height="15" rx="4" fill="#f4f5f7" stroke="#333" stroke-width="1.2"/><rect x="3" y="6" width="11" height="9" fill="url(#bg104376)"/></svg><div class="abs txt" style="left:134px;top:369px;font-size:11px;color:#333;font-weight:normal">キーボード</div>
<div class="abs row" style="left:76px;top:390px;width:90px;height:20px"></div><svg class="abs" style="left:79px;top:394px" width="17" height="12"><path d="M0.5,6 Q8.5,-2 16.5,6 Q8.5,14 0.5,6Z" fill="#9a9a9a"/><circle cx="8.5" cy="6" r="3.2" fill="#f1f1f1"/><circle cx="8.5" cy="6" r="1.8" fill="#9a9a9a"/></svg><svg class="abs" style="left:104px;top:392px" width="17" height="17"><defs><linearGradient id="bg104400" x1="0" x2="1"><stop offset="0" stop-color="#c8cdd4"/><stop offset="0.6" stop-color="#e9ecef"/><stop offset="1" stop-color="#b9bec6"/></linearGradient></defs><rect x="1" y="1" width="15" height="15" rx="4" fill="#f4f5f7" stroke="#333" stroke-width="1.2"/><rect x="3" y="6" width="11" height="9" fill="url(#bg104400)"/></svg><div class="abs txt" style="left:134px;top:393px;font-size:11px;color:#333;font-weight:normal">電源</div>
<div class="abs row" style="left:76px;top:414px;width:118px;height:20px"></div><svg class="abs" style="left:79px;top:418px" width="17" height="12"><path d="M0.5,6 Q8.5,-2 16.5,6 Q8.5,14 0.5,6Z" fill="#9a9a9a"/><circle cx="8.5" cy="6" r="3.2" fill="#f1f1f1"/><circle cx="8.5" cy="6" r="1.8" fill="#9a9a9a"/></svg><svg class="abs" style="left:104px;top:416px" width="17" height="17"><defs><linearGradient id="bg104424" x1="0" x2="1"><stop offset="0" stop-color="#c8cdd4"/><stop offset="0.6" stop-color="#e9ecef"/><stop offset="1" stop-color="#b9bec6"/></linearGradient></defs><rect x="1" y="1" width="15" height="15" rx="4" fill="#f4f5f7" stroke="#333" stroke-width="1.2"/><rect x="3" y="6" width="11" height="9" fill="url(#bg104424)"/></svg><div class="abs txt" style="left:134px;top:417px;font-size:11px;color:#333;font-weight:normal">電源SW枠</div>
<div class="abs row" style="left:76px;top:438px;width:134px;height:20px"></div><svg class="abs" style="left:79px;top:442px" width="17" height="12"><path d="M0.5,6 Q8.5,-2 16.5,6 Q8.5,14 0.5,6Z" fill="#9a9a9a"/><circle cx="8.5" cy="6" r="3.2" fill="#f1f1f1"/><circle cx="8.5" cy="6" r="1.8" fill="#9a9a9a"/></svg><svg class="abs" style="left:104px;top:440px" width="17" height="17"><defs><linearGradient id="bg104448" x1="0" x2="1"><stop offset="0" stop-color="#c8cdd4"/><stop offset="0.6" stop-color="#e9ecef"/><stop offset="1" stop-color="#b9bec6"/></linearGradient></defs><rect x="1" y="1" width="15" height="15" rx="4" fill="#f4f5f7" stroke="#333" stroke-width="1.2"/><rect x="3" y="6" width="11" height="9" fill="url(#bg104448)"/></svg><div class="abs txt" style="left:134px;top:441px;font-size:11px;color:#333;font-weight:normal">拡張ポート蓋窓</div>
<div class="abs row" style="left:76px;top:462px;width:122px;height:20px"></div><svg class="abs" style="left:79px;top:466px" width="17" height="12"><path d="M0.5,6 Q8.5,-2 16.5,6 Q8.5,14 0.5,6Z" fill="#9a9a9a"/><circle cx="8.5" cy="6" r="3.2" fill="#f1f1f1"/><circle cx="8.5" cy="6" r="1.8" fill="#9a9a9a"/></svg><svg class="abs" style="left:104px;top:464px" width="17" height="17"><defs><linearGradient id="bg104472" x1="0" x2="1"><stop offset="0" stop-color="#c8cdd4"/><stop offset="0.6" stop-color="#e9ecef"/><stop offset="1" stop-color="#b9bec6"/></linearGradient></defs><rect x="1" y="1" width="15" height="15" rx="4" fill="#f4f5f7" stroke="#333" stroke-width="1.2"/><rect x="3" y="6" width="11" height="9" fill="url(#bg104472)"/></svg><div class="abs txt" style="left:134px;top:465px;font-size:11px;color:#333;font-weight:normal">拡張ポート蓋</div>
<div class="abs row" style="left:76px;top:486px;width:147px;height:20px"></div><svg class="abs" style="left:79px;top:490px" width="17" height="12"><path d="M0.5,6 Q8.5,-2 16.5,6 Q8.5,14 0.5,6Z" fill="#9a9a9a"/><circle cx="8.5" cy="6" r="3.2" fill="#f1f1f1"/><circle cx="8.5" cy="6" r="1.8" fill="#9a9a9a"/></svg><svg class="abs" style="left:104px;top:488px" width="17" height="17"><defs><linearGradient id="bg104496" x1="0" x2="1"><stop offset="0" stop-color="#c8cdd4"/><stop offset="0.6" stop-color="#e9ecef"/><stop offset="1" stop-color="#b9bec6"/></linearGradient></defs><rect x="1" y="1" width="15" height="15" rx="4" fill="#f4f5f7" stroke="#333" stroke-width="1.2"/><rect x="3" y="6" width="11" height="9" fill="url(#bg104496)"/></svg><div class="abs txt" style="left:134px;top:489px;font-size:11px;color:#333;font-weight:normal">電源スイッチ窓 (1)</div>
<div class="abs row" style="left:76px;top:510px;width:131px;height:20px"></div><svg class="abs" style="left:79px;top:514px" width="17" height="12"><path d="M0.5,6 Q8.5,-2 16.5,6 Q8.5,14 0.5,6Z" fill="#9a9a9a"/><circle cx="8.5" cy="6" r="3.2" fill="#f1f1f1"/><circle cx="8.5" cy="6" r="1.8" fill="#9a9a9a"/></svg><svg class="abs" style="left:104px;top:512px" width="17" height="17"><defs><linearGradient id="bg104520" x1="0" x2="1"><stop offset="0" stop-color="#c8cdd4"/><stop offset="0.6" stop-color="#e9ecef"/><stop offset="1" stop-color="#b9bec6"/></linearGradient></defs><rect x="1" y="1" width="15" height="15" rx="4" fill="#f4f5f7" stroke="#333" stroke-width="1.2"/><rect x="3" y="6" width="11" height="9" fill="url(#bg104520)"/></svg><div class="abs txt" style="left:134px;top:513px;font-size:11px;color:#333;font-weight:normal">ボディ上面 (1)</div>
<div class="abs row" style="left:76px;top:534px;width:131px;height:20px"></div><svg class="abs" style="left:79px;top:538px" width="17" height="12"><path d="M0.5,6 Q8.5,-2 16.5,6 Q8.5,14 0.5,6Z" fill="#9a9a9a"/><circle cx="8.5" cy="6" r="3.2" fill="#f1f1f1"/><circle cx="8.5" cy="6" r="1.8" fill="#9a9a9a"/></svg><svg class="abs" style="left:104px;top:536px" width="17" height="17"><defs><linearGradient id="bg104544" x1="0" x2="1"><stop offset="0" stop-color="#c8cdd4"/><stop offset="0.6" stop-color="#e9ecef"/><stop offset="1" stop-color="#b9bec6"/></linearGradient></defs><rect x="1" y="1" width="15" height="15" rx="4" fill="#f4f5f7" stroke="#333" stroke-width="1.2"/><rect x="3" y="6" width="11" height="9" fill="url(#bg104544)"/></svg><div class="abs txt" style="left:134px;top:537px;font-size:11px;color:#333;font-weight:normal">ボディ上面 (2)</div>
<div class="abs row" style="left:76px;top:558px;width:123px;height:20px"></div><svg class="abs" style="left:79px;top:562px" width="17" height="12"><path d="M0.5,6 Q8.5,-2 16.5,6 Q8.5,14 0.5,6Z" fill="#9a9a9a"/><circle cx="8.5" cy="6" r="3.2" fill="#f1f1f1"/><circle cx="8.5" cy="6" r="1.8" fill="#9a9a9a"/></svg><svg class="abs" style="left:104px;top:560px" width="17" height="17"><defs><linearGradient id="bg104568" x1="0" x2="1"><stop offset="0" stop-color="#c8cdd4"/><stop offset="0.6" stop-color="#e9ecef"/><stop offset="1" stop-color="#b9bec6"/></linearGradient></defs><rect x="1" y="1" width="15" height="15" rx="4" fill="#f4f5f7" stroke="#333" stroke-width="1.2"/><rect x="3" y="6" width="11" height="9" fill="url(#bg104568)"/></svg><div class="abs txt" style="left:134px;top:561px;font-size:11px;color:#333;font-weight:normal">内部フレーム</div>
<div class="abs row" style="left:76px;top:582px;width:135px;height:20px"></div><svg class="abs" style="left:79px;top:586px" width="17" height="12"><path d="M0.5,6 Q8.5,-2 16.5,6 Q8.5,14 0.5,6Z" fill="#9a9a9a"/><circle cx="8.5" cy="6" r="3.2" fill="#f1f1f1"/><circle cx="8.5" cy="6" r="1.8" fill="#9a9a9a"/></svg><svg class="abs" style="left:104px;top:584px" width="17" height="17"><defs><linearGradient id="bg104592" x1="0" x2="1"><stop offset="0" stop-color="#c8cdd4"/><stop offset="0.6" stop-color="#e9ecef"/><stop offset="1" stop-color="#b9bec6"/></linearGradient></defs><rect x="1" y="1" width="15" height="15" rx="4" fill="#f4f5f7" stroke="#333" stroke-width="1.2"/><rect x="3" y="6" width="11" height="9" fill="url(#bg104592)"/></svg><div class="abs txt" style="left:134px;top:585px;font-size:11px;color:#333;font-weight:normal">電源SWパネル</div>
<div class="abs row" style="left:76px;top:606px;width:90px;height:20px"></div><svg class="abs" style="left:79px;top:610px" width="17" height="12"><path d="M0.5,6 Q8.5,-2 16.5,6 Q8.5,14 0.5,6Z" fill="#9a9a9a"/><circle cx="8.5" cy="6" r="3.2" fill="#f1f1f1"/><circle cx="8.5" cy="6" r="1.8" fill="#9a9a9a"/></svg><svg class="abs" style="left:104px;top:608px" width="17" height="17"><defs><linearGradient id="bg104616" x1="0" x2="1"><stop offset="0" stop-color="#c8cdd4"/><stop offset="0.6" stop-color="#e9ecef"/><stop offset="1" stop-color="#b9bec6"/></linearGradient></defs><rect x="1" y="1" width="15" height="15" rx="4" fill="#f4f5f7" stroke="#333" stroke-width="1.2"/><rect x="3" y="6" width="11" height="9" fill="url(#bg104616)"/></svg><div class="abs txt" style="left:134px;top:609px;font-size:11px;color:#333;font-weight:normal">LED</div>
<div class="abs row" style="left:58px;top:630px;width:110px;height:20px"></div><svg class="abs" style="left:39px;top:634px" width="12" height="12"><defs><linearGradient id="tg" x1="0" x2="1"><stop offset="0" stop-color="#ddd"/><stop offset="1" stop-color="#555"/></linearGradient></defs><path d="M1,11 L11,1 L11,11Z" fill="url(#tg)" stroke="#111" stroke-width="1"/></svg><svg class="abs" style="left:61px;top:634px" width="17" height="12"><path d="M0.5,6 Q8.5,-2 16.5,6 Q8.5,14 0.5,6Z" fill="#9a9a9a"/><circle cx="8.5" cy="6" r="3.2" fill="#f1f1f1"/><circle cx="8.5" cy="6" r="1.8" fill="#9a9a9a"/></svg><svg class="abs" style="left:86px;top:633px" width="17" height="14"><path d="M0.5,0.5 h6 l1.5,1.5 h0 V3 H0.5Z" fill="#9c9c9c"/><rect x="0.5" y="3.5" width="16" height="10" fill="#9c9c9c"/><rect x="8" y="1" width="8.5" height="2.5" fill="#9c9c9c"/></svg><div class="abs txt" style="left:116px;top:633px;font-size:11px;color:#333;font-weight:normal">キャンバス</div>
<div class="abs row" style="left:76px;top:654px;width:142px;height:20px"></div><svg class="abs" style="left:79px;top:657px" width="17" height="14"><path d="M1,7 Q8.5,0 16,7 Q8.5,14 1,7Z" fill="none" stroke="#a8a8a8" stroke-width="1.1"/><circle cx="8.5" cy="7" r="2.6" fill="none" stroke="#a8a8a8" stroke-width="1"/><line x1="3" y1="1.5" x2="14" y2="12.5" stroke="#a8a8a8" stroke-width="1.1"/></svg><svg class="abs" style="left:104px;top:656px" width="17" height="17"><rect x="0.5" y="0.5" width="16" height="16" fill="#3b4650"/><rect x="2" y="2" width="13" height="13" fill="#bcdcf0"/><path d="M2,15 L8,7 L15,13 V15Z" fill="#8a8f96"/><circle cx="12" cy="4.5" r="1.6" fill="#f3e08a"/><circle cx="4.8" cy="12" r="3.4" fill="#d12a2a"/><circle cx="4.8" cy="12" r="2.2" fill="#e8a0a0"/><line x1="3" y1="10.3" x2="6.6" y2="13.7" stroke="#d12a2a" stroke-width="1"/></svg><div class="abs txt" style="left:134px;top:657px;font-size:11px;color:#333;font-weight:normal">s1105032590.9</div>
<div class="abs row" style="left:76px;top:678px;width:226px;height:20px"></div><svg class="abs" style="left:79px;top:681px" width="17" height="14"><path d="M1,7 Q8.5,0 16,7 Q8.5,14 1,7Z" fill="none" stroke="#a8a8a8" stroke-width="1.1"/><circle cx="8.5" cy="7" r="2.6" fill="none" stroke="#a8a8a8" stroke-width="1"/><line x1="3" y1="1.5" x2="14" y2="12.5" stroke="#a8a8a8" stroke-width="1.1"/></svg><svg class="abs" style="left:104px;top:680px" width="17" height="17"><rect x="0.5" y="0.5" width="16" height="16" fill="#3b4650"/><rect x="2" y="2" width="13" height="13" fill="#bcdcf0"/><path d="M2,15 L8,7 L15,13 V15Z" fill="#8a8f96"/><circle cx="12" cy="4.5" r="1.6" fill="#f3e08a"/><circle cx="4.8" cy="12" r="3.4" fill="#d12a2a"/><circle cx="4.8" cy="12" r="2.2" fill="#e8a0a0"/><line x1="3" y1="10.3" x2="6.6" y2="13.7" stroke="#d12a2a" stroke-width="1"/></svg><div class="abs txt" style="left:134px;top:681px;font-size:11px;color:#333;font-weight:normal">i-img1190x1200-1694482880gf...</div>
<div class="abs row" style="left:76px;top:702px;width:150px;height:20px"></div><svg class="abs" style="left:79px;top:705px" width="17" height="14"><path d="M1,7 Q8.5,0 16,7 Q8.5,14 1,7Z" fill="none" stroke="#a8a8a8" stroke-width="1.1"/><circle cx="8.5" cy="7" r="2.6" fill="none" stroke="#a8a8a8" stroke-width="1"/><line x1="3" y1="1.5" x2="14" y2="12.5" stroke="#a8a8a8" stroke-width="1.1"/></svg><svg class="abs" style="left:104px;top:704px" width="17" height="17"><rect x="0.5" y="0.5" width="16" height="16" fill="#3b4650"/><rect x="2" y="2" width="13" height="13" fill="#bcdcf0"/><path d="M2,15 L8,7 L15,13 V15Z" fill="#8a8f96"/><circle cx="12" cy="4.5" r="1.6" fill="#f3e08a"/><circle cx="4.8" cy="12" r="3.4" fill="#d12a2a"/><circle cx="4.8" cy="12" r="2.2" fill="#e8a0a0"/><line x1="3" y1="10.3" x2="6.6" y2="13.7" stroke="#d12a2a" stroke-width="1"/></svg><div class="abs txt" style="left:134px;top:705px;font-size:11px;color:#333;font-weight:normal">s1105032590.10</div>
<div class="abs row" style="left:58px;top:726px;width:98px;height:20px"></div><svg class="abs" style="left:40px;top:729px" width="11" height="15"><path d="M1.5,1.5 L9.5,7.5 L1.5,13.5Z" fill="#fff" stroke="#222" stroke-width="1.2" stroke-linejoin="round"/></svg><svg class="abs" style="left:61px;top:730px" width="17" height="12"><path d="M0.5,6 Q8.5,-2 16.5,6 Q8.5,14 0.5,6Z" fill="#9a9a9a"/><circle cx="8.5" cy="6" r="3.2" fill="#f1f1f1"/><circle cx="8.5" cy="6" r="1.8" fill="#9a9a9a"/></svg><svg class="abs" style="left:86px;top:729px" width="17" height="14"><path d="M0.5,0.5 h6 l1.5,1.5 h0 V3 H0.5Z" fill="#9c9c9c"/><rect x="0.5" y="3.5" width="16" height="10" fill="#9c9c9c"/><rect x="8" y="1" width="8.5" height="2.5" fill="#9c9c9c"/></svg><div class="abs txt" style="left:116px;top:729px;font-size:11px;color:#333;font-weight:normal">スケッチ</div>
<div class="abs row" style="left:58px;top:750px;width:138px;height:20px"></div><svg class="abs" style="left:40px;top:753px" width="11" height="15"><path d="M1.5,1.5 L9.5,7.5 L1.5,13.5Z" fill="#fff" stroke="#222" stroke-width="1.2" stroke-linejoin="round"/></svg><svg class="abs" style="left:61px;top:754px" width="17" height="12"><path d="M0.5,6 Q8.5,-2 16.5,6 Q8.5,14 0.5,6Z" fill="#9a9a9a"/><circle cx="8.5" cy="6" r="3.2" fill="#f1f1f1"/><circle cx="8.5" cy="6" r="1.8" fill="#9a9a9a"/></svg><svg class="abs" style="left:86px;top:753px" width="17" height="14"><path d="M0.5,0.5 h6 l1.5,1.5 h0 V3 H0.5Z" fill="#9c9c9c"/><rect x="0.5" y="3.5" width="16" height="10" fill="#9c9c9c"/><rect x="8" y="1" width="8.5" height="2.5" fill="#9c9c9c"/></svg><div class="abs txt" style="left:116px;top:753px;font-size:11px;color:#333;font-weight:normal">コンストラクション</div>
<div class="abs row" style="left:58px;top:774px;width:90px;height:20px"></div><svg class="abs" style="left:61px;top:775px" width="18" height="18"><path d="M1,12 L1,15 L12,15 L14,13 L14,12Z" fill="#b9b9b9"/><path d="M1,4 L3,1.5 L13,1.5 L12,4Z" fill="#8fccf5"/><rect x="1" y="4" width="11" height="9" fill="#64aee3"/><path d="M12,4 L13,1.5 L13,11 L12,13Z" fill="#3f8fca"/><path d="M15.5,13 V2 M14,4 L15.5,1 L17,4" stroke="#222" stroke-width="1.1" fill="none"/></svg><div class="abs txt" style="left:91px;top:777px;font-size:11px;color:#333;font-weight:normal">押し出し11</div>
<div class="abs row" style="left:58px;top:798px;width:92px;height:20px"></div><svg class="abs" style="left:61px;top:799px" width="18" height="18"><path d="M1,12 L1,15 L12,15 L14,13 L14,12Z" fill="#b9b9b9"/><path d="M1,4 L3,1.5 L13,1.5 L12,4Z" fill="#8fccf5"/><rect x="1" y="4" width="11" height="9" fill="#64aee3"/><path d="M12,4 L13,1.5 L13,11 L12,13Z" fill="#3f8fca"/><path d="M15.5,13 V2 M14,4 L15.5,1 L17,4" stroke="#222" stroke-width="1.1" fill="none"/></svg><div class="abs txt" style="left:91px;top:801px;font-size:11px;color:#333;font-weight:normal">押し出し12</div>
<div class="abs row" style="left:58px;top:822px;width:77px;height:20px"></div><svg class="abs" style="left:61px;top:823px" width="18" height="18"><path d="M1,16 V7 L5,2.5 H9 L6,16Z" fill="#dcdcdc" stroke="#444" stroke-width="1"/><path d="M6,5 L10,3 L13,12 L9,15Z" fill="#5ba7df"/><path d="M11,3 L14,8 M12,2.5 L11,1.5" stroke="#222" stroke-width="1" fill="none"/></svg><div class="abs txt" style="left:91px;top:825px;font-size:11px;color:#333;font-weight:normal">勾配13</div>
<div class="abs row" style="left:58px;top:846px;width:77px;height:20px"></div><svg class="abs" style="left:61px;top:847px" width="18" height="18"><path d="M1,16 V7 L5,2.5 H9 L6,16Z" fill="#dcdcdc" stroke="#444" stroke-width="1"/><path d="M6,5 L10,3 L13,12 L9,15Z" fill="#5ba7df"/><path d="M11,3 L14,8 M12,2.5 L11,1.5" stroke="#222" stroke-width="1" fill="none"/></svg><div class="abs txt" style="left:91px;top:849px;font-size:11px;color:#333;font-weight:normal">勾配16</div>
<div class="abs row" style="left:58px;top:870px;width:77px;height:20px"></div><svg class="abs" style="left:61px;top:871px" width="18" height="18"><path d="M1,16 V7 L5,2.5 H9 L6,16Z" fill="#dcdcdc" stroke="#444" stroke-width="1"/><path d="M6,5 L10,3 L13,12 L9,15Z" fill="#5ba7df"/><path d="M11,3 L14,8 M12,2.5 L11,1.5" stroke="#222" stroke-width="1" fill="none"/></svg><div class="abs txt" style="left:91px;top:873px;font-size:11px;color:#333;font-weight:normal">勾配19</div>
<div class="abs row" style="left:58px;top:894px;width:77px;height:20px"></div><svg class="abs" style="left:61px;top:895px" width="18" height="18"><path d="M1,16 V7 L5,2.5 H9 L6,16Z" fill="#dcdcdc" stroke="#444" stroke-width="1"/><path d="M6,5 L10,3 L13,12 L9,15Z" fill="#5ba7df"/><path d="M11,3 L14,8 M12,2.5 L11,1.5" stroke="#222" stroke-width="1" fill="none"/></svg><div class="abs txt" style="left:91px;top:897px;font-size:11px;color:#333;font-weight:normal">勾配20</div>
<div class="abs row" style="left:58px;top:918px;width:97px;height:20px"></div><svg class="abs" style="left:61px;top:919px" width="18" height="18"><path d="M1,12 L1,15 L12,15 L14,13 L14,12Z" fill="#b9b9b9"/><path d="M1,4 L3,1.5 L13,1.5 L12,4Z" fill="#8fccf5"/><rect x="1" y="4" width="11" height="9" fill="#64aee3"/><path d="M12,4 L13,1.5 L13,11 L12,13Z" fill="#3f8fca"/><path d="M15.5,13 V2 M14,4 L15.5,1 L17,4" stroke="#222" stroke-width="1.1" fill="none"/></svg><div class="abs txt" style="left:91px;top:921px;font-size:11px;color:#333;font-weight:normal">押し出し22</div>
<div class="abs row" style="left:58px;top:942px;width:85px;height:20px"></div><svg class="abs" style="left:61px;top:943px" width="18" height="18"><path d="M1,16 V7 L6,2 H13 V16Z" fill="#dcdcdc" stroke="#444" stroke-width="1"/><path d="M1,8 L6,2 L13,6 L8,12Z" fill="#5ba7df"/></svg><div class="abs txt" style="left:91px;top:945px;font-size:11px;color:#333;font-weight:normal">面取り23</div>
<div class="abs row" style="left:58px;top:966px;width:77px;height:20px"></div><svg class="abs" style="left:61px;top:967px" width="18" height="18"><path d="M1,16 V7 L5,2.5 H9 L6,16Z" fill="#dcdcdc" stroke="#444" stroke-width="1"/><path d="M6,5 L10,3 L13,12 L9,15Z" fill="#5ba7df"/><path d="M11,3 L14,8 M12,2.5 L11,1.5" stroke="#222" stroke-width="1" fill="none"/></svg><div class="abs txt" style="left:91px;top:969px;font-size:11px;color:#333;font-weight:normal">勾配26</div>
<div class="abs" style="left:4px;top:1011px;width:300px;height:25px;background:#f1f1f1;border:1px solid #c6c6c6"></div>
<div class="abs txt" style="left:28px;top:1017px;font-size:11px;color:#555">コメント</div>
<svg class="abs" style="left:281px;top:1017px" width="12" height="12"><circle cx="6.5" cy="6.5" r="4.8" fill="#222"/><rect x="3.5" y="5.8" width="6" height="1.4" fill="#fff"/><rect x="5.8" y="3.5" width="1.4" height="6" fill="#fff"/></svg>
<div class="abs" style="left:842px;top:1010px;width:237px;height:23px;background:#f1f1f1"></div>
<svg class="abs" style="left:842px;top:1010px" width="237" height="23">
 <path d="M11,20 V4 M8,7 L11,3 L14,7" stroke="#333" stroke-width="1.2" fill="none"/>
 <path d="M4,12 C4,9 18,9 18,12 C18,15 8,15 6,13 M6,13 L8,11 M6,13 L8,15" stroke="#222" stroke-width="1.3" fill="none"/>
 <path d="M24,10 H31 L27.5,14Z" fill="#222"/>
 <rect x="36" y="8" width="15" height="12" fill="#fff" stroke="#444" stroke-width="1.2"/>
 <rect x="39" y="12" width="9" height="4" fill="#bbb" stroke="#555" stroke-width="0.8"/>
 <path d="M38,8 L41,4 L44,7 L48,4 L50,8" stroke="#444" stroke-width="1" fill="#fff"/>
 <path d="M62,20 C58,16 57,13 58,11 L60,12 V5 L62,5 V10 L63,4 H65 V10 L66,4 H68 V10 L69,5 H71 V14 C71,17 70,19 68,20Z" fill="#fff" stroke="#333" stroke-width="1"/>
 <circle cx="90" cy="11" r="5" fill="#e6f2f5" stroke="#333" stroke-width="1.3"/>
 <path d="M93.5,14.5 L97,18" stroke="#333" stroke-width="2.4"/>
 <path d="M97,4 V9 M94.5,6.5 H99.5 M94.5,10.5 H99.5" stroke="#333" stroke-width="0.9"/>
 <rect x="115" y="4" width="16" height="15" fill="none" stroke="#555" stroke-width="0.8" stroke-dasharray="2,1.5"/>
 <circle cx="123" cy="10" r="6" fill="#e6f2f5" stroke="#333" stroke-width="1.3"/>
 <path d="M127,14 L131,18" stroke="#333" stroke-width="2.4"/>
 <path d="M135,10 H142 L138.5,14Z" fill="#222"/>
 <rect x="147" y="5" width="15" height="12" rx="1" fill="#8fb6e4" stroke="#333" stroke-width="1.4"/>
 <path d="M152,19 H157" stroke="#333" stroke-width="1.5"/>
 <path d="M165,10 H172 L168.5,14Z" fill="#222"/>
 <rect x="178" y="5" width="15" height="14" fill="#8a8f98"/>
 <path d="M178,8.5 H193 M178,12 H193 M178,15.5 H193 M181.5,5 V19 M185,5 V19 M188.5,5 V19" stroke="#e0e0e0" stroke-width="0.9"/>
 <path d="M196,10 H203 L199.5,14Z" fill="#222"/>
 <rect x="209" y="5" width="15" height="14" fill="#4a6fb3" rx="1"/>
 <rect x="211" y="7" width="5" height="4" fill="#a8c4ec"/><rect x="218" y="7" width="4" height="4" fill="#a8c4ec"/>
 <rect x="211" y="13" width="5" height="4" fill="#a8c4ec"/><rect x="218" y="13" width="4" height="4" fill="#a8c4ec"/>
 <path d="M227,10 H234 L230.5,14Z" fill="#222"/>
</svg>
<div class="abs" style="left:0;top:1040px;width:1920px;height:8px;background:#111"></div>
<div class="abs" style="left:490px;top:1040px;width:48px;height:8px;background:#2b2b2b"></div>
<div class="abs" style="left:1874px;top:1044px;width:22px;height:4px;color:#fff;font-size:9px;overflow:hidden;line-height:9px">2:22</div>

</body></html>
